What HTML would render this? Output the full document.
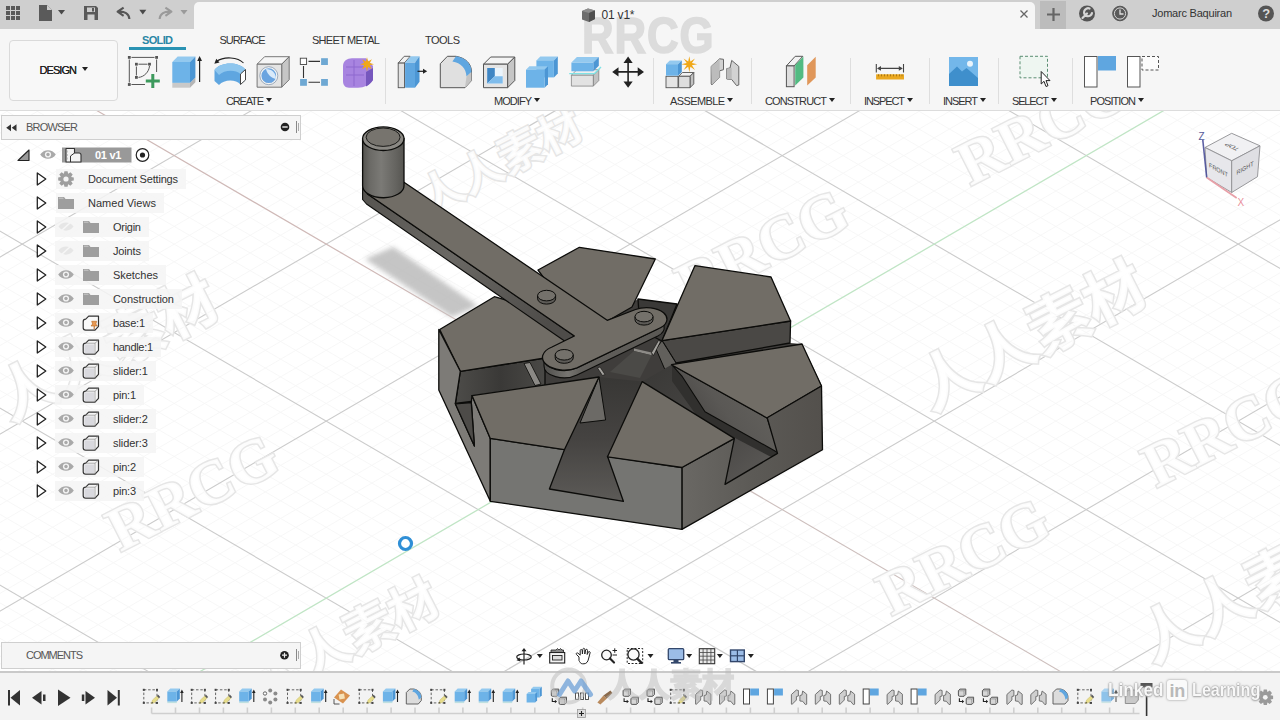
<!DOCTYPE html>
<html><head><meta charset="utf-8"><title>01 v1</title>
<style>
html,body{margin:0;padding:0;background:#fff;}
#root{position:relative;width:1280px;height:720px;overflow:hidden;background:#fff;font-family:"Liberation Sans","Noto Sans CJK SC",sans-serif;font-size:11px;color:#333;}
.abs{position:absolute;}
#topbar{position:absolute;left:0;top:0;width:1280px;height:29px;background:#cfcfcf;}
#tab{position:absolute;left:194px;top:1.5px;width:841px;height:28px;background:#f6f6f6;border-radius:5px 5px 0 0;}
#toolbar{position:absolute;left:0;top:29px;width:1280px;height:81px;background:#f6f6f6;border-bottom:1px solid #dcdcdc;}
.lbl{position:absolute;white-space:nowrap;line-height:12px;}
.tri{display:inline-block;width:0;height:0;border-left:3px solid transparent;border-right:3px solid transparent;border-top:4px solid #222;vertical-align:middle;margin-left:3px;position:relative;top:-2px}
.sep{position:absolute;top:58px;width:1px;height:46px;background:#dedede;}
.wm{position:absolute;white-space:nowrap;font-weight:bold;transform-origin:50% 50%;pointer-events:none;}

</style></head>
<body>
<div id="root">
<svg id="grid" width="1280" height="720" viewBox="0 0 1280 720" style="position:absolute;left:0;top:0">
<g><line x1="-1178.6" y1="430.0" x2="645.4" y2="-632.0" stroke="#f6f6f6" stroke-width="0.9"/>
<line x1="-1178.6" y1="412.2" x2="645.4" y2="1474.2" stroke="#f6f6f6" stroke-width="0.9"/>
<line x1="-1163.4" y1="438.8" x2="660.6" y2="-623.2" stroke="#f6f6f6" stroke-width="0.9"/>
<line x1="-1163.4" y1="403.4" x2="660.6" y2="1465.4" stroke="#f6f6f6" stroke-width="0.9"/>
<line x1="-1148.2" y1="447.7" x2="675.8" y2="-614.3" stroke="#f6f6f6" stroke-width="0.9"/>
<line x1="-1148.2" y1="394.6" x2="675.8" y2="1456.5" stroke="#f6f6f6" stroke-width="0.9"/>
<line x1="-1133.0" y1="456.5" x2="691.0" y2="-605.5" stroke="#f6f6f6" stroke-width="0.9"/>
<line x1="-1133.0" y1="385.7" x2="691.0" y2="1447.7" stroke="#f6f6f6" stroke-width="0.9"/>
<line x1="-1117.8" y1="465.4" x2="706.2" y2="-596.6" stroke="#f6f6f6" stroke-width="0.9"/>
<line x1="-1117.8" y1="376.9" x2="706.2" y2="1438.8" stroke="#f6f6f6" stroke-width="0.9"/>
<line x1="-1102.6" y1="474.2" x2="721.4" y2="-587.8" stroke="#f6f6f6" stroke-width="0.9"/>
<line x1="-1102.6" y1="368.0" x2="721.4" y2="1430.0" stroke="#f6f6f6" stroke-width="0.9"/>
<line x1="-1087.4" y1="483.1" x2="736.6" y2="-579.0" stroke="#f6f6f6" stroke-width="0.9"/>
<line x1="-1087.4" y1="359.2" x2="736.6" y2="1421.2" stroke="#f6f6f6" stroke-width="0.9"/>
<line x1="-1072.2" y1="491.9" x2="751.8" y2="-570.1" stroke="#f6f6f6" stroke-width="0.9"/>
<line x1="-1072.2" y1="350.3" x2="751.8" y2="1412.3" stroke="#f6f6f6" stroke-width="0.9"/>
<line x1="-1057.0" y1="500.8" x2="767.0" y2="-561.2" stroke="#f6f6f6" stroke-width="0.9"/>
<line x1="-1057.0" y1="341.4" x2="767.0" y2="1403.5" stroke="#f6f6f6" stroke-width="0.9"/>
<line x1="-1026.6" y1="518.5" x2="797.4" y2="-543.5" stroke="#f6f6f6" stroke-width="0.9"/>
<line x1="-1026.6" y1="323.8" x2="797.4" y2="1385.8" stroke="#f6f6f6" stroke-width="0.9"/>
<line x1="-1011.4" y1="527.3" x2="812.6" y2="-534.7" stroke="#f6f6f6" stroke-width="0.9"/>
<line x1="-1011.4" y1="314.9" x2="812.6" y2="1376.9" stroke="#f6f6f6" stroke-width="0.9"/>
<line x1="-996.2" y1="536.2" x2="827.8" y2="-525.8" stroke="#f6f6f6" stroke-width="0.9"/>
<line x1="-996.2" y1="306.1" x2="827.8" y2="1368.0" stroke="#f6f6f6" stroke-width="0.9"/>
<line x1="-981.0" y1="545.0" x2="843.0" y2="-517.0" stroke="#f6f6f6" stroke-width="0.9"/>
<line x1="-981.0" y1="297.2" x2="843.0" y2="1359.2" stroke="#f6f6f6" stroke-width="0.9"/>
<line x1="-965.8" y1="553.9" x2="858.2" y2="-508.1" stroke="#f6f6f6" stroke-width="0.9"/>
<line x1="-965.8" y1="288.4" x2="858.2" y2="1350.3" stroke="#f6f6f6" stroke-width="0.9"/>
<line x1="-950.6" y1="562.7" x2="873.4" y2="-499.3" stroke="#f6f6f6" stroke-width="0.9"/>
<line x1="-950.6" y1="279.5" x2="873.4" y2="1341.5" stroke="#f6f6f6" stroke-width="0.9"/>
<line x1="-935.4" y1="571.5" x2="888.6" y2="-490.4" stroke="#f6f6f6" stroke-width="0.9"/>
<line x1="-935.4" y1="270.7" x2="888.6" y2="1332.7" stroke="#f6f6f6" stroke-width="0.9"/>
<line x1="-920.2" y1="580.4" x2="903.8" y2="-481.6" stroke="#f6f6f6" stroke-width="0.9"/>
<line x1="-920.2" y1="261.8" x2="903.8" y2="1323.8" stroke="#f6f6f6" stroke-width="0.9"/>
<line x1="-905.0" y1="589.2" x2="919.0" y2="-472.7" stroke="#f6f6f6" stroke-width="0.9"/>
<line x1="-905.0" y1="252.9" x2="919.0" y2="1315.0" stroke="#f6f6f6" stroke-width="0.9"/>
<line x1="-874.6" y1="607.0" x2="949.4" y2="-455.0" stroke="#f6f6f6" stroke-width="0.9"/>
<line x1="-874.6" y1="235.2" x2="949.4" y2="1297.2" stroke="#f6f6f6" stroke-width="0.9"/>
<line x1="-859.4" y1="615.8" x2="964.6" y2="-446.2" stroke="#f6f6f6" stroke-width="0.9"/>
<line x1="-859.4" y1="226.4" x2="964.6" y2="1288.4" stroke="#f6f6f6" stroke-width="0.9"/>
<line x1="-844.2" y1="624.7" x2="979.8" y2="-437.3" stroke="#f6f6f6" stroke-width="0.9"/>
<line x1="-844.2" y1="217.6" x2="979.8" y2="1279.5" stroke="#f6f6f6" stroke-width="0.9"/>
<line x1="-829.0" y1="633.5" x2="995.0" y2="-428.5" stroke="#f6f6f6" stroke-width="0.9"/>
<line x1="-829.0" y1="208.7" x2="995.0" y2="1270.7" stroke="#f6f6f6" stroke-width="0.9"/>
<line x1="-813.8" y1="642.4" x2="1010.2" y2="-419.6" stroke="#f6f6f6" stroke-width="0.9"/>
<line x1="-813.8" y1="199.9" x2="1010.2" y2="1261.8" stroke="#f6f6f6" stroke-width="0.9"/>
<line x1="-798.6" y1="651.2" x2="1025.4" y2="-410.8" stroke="#f6f6f6" stroke-width="0.9"/>
<line x1="-798.6" y1="191.0" x2="1025.4" y2="1253.0" stroke="#f6f6f6" stroke-width="0.9"/>
<line x1="-783.4" y1="660.0" x2="1040.6" y2="-401.9" stroke="#f6f6f6" stroke-width="0.9"/>
<line x1="-783.4" y1="182.2" x2="1040.6" y2="1244.2" stroke="#f6f6f6" stroke-width="0.9"/>
<line x1="-768.2" y1="668.9" x2="1055.8" y2="-393.1" stroke="#f6f6f6" stroke-width="0.9"/>
<line x1="-768.2" y1="173.3" x2="1055.8" y2="1235.3" stroke="#f6f6f6" stroke-width="0.9"/>
<line x1="-753.0" y1="677.8" x2="1071.0" y2="-384.2" stroke="#f6f6f6" stroke-width="0.9"/>
<line x1="-753.0" y1="164.5" x2="1071.0" y2="1226.5" stroke="#f6f6f6" stroke-width="0.9"/>
<line x1="-722.6" y1="695.5" x2="1101.4" y2="-366.5" stroke="#f6f6f6" stroke-width="0.9"/>
<line x1="-722.6" y1="146.8" x2="1101.4" y2="1208.8" stroke="#f6f6f6" stroke-width="0.9"/>
<line x1="-707.4" y1="704.3" x2="1116.6" y2="-357.7" stroke="#f6f6f6" stroke-width="0.9"/>
<line x1="-707.4" y1="137.9" x2="1116.6" y2="1199.9" stroke="#f6f6f6" stroke-width="0.9"/>
<line x1="-692.2" y1="713.1" x2="1131.8" y2="-348.9" stroke="#f6f6f6" stroke-width="0.9"/>
<line x1="-692.2" y1="129.1" x2="1131.8" y2="1191.0" stroke="#f6f6f6" stroke-width="0.9"/>
<line x1="-677.0" y1="722.0" x2="1147.0" y2="-340.0" stroke="#f6f6f6" stroke-width="0.9"/>
<line x1="-677.0" y1="120.2" x2="1147.0" y2="1182.2" stroke="#f6f6f6" stroke-width="0.9"/>
<line x1="-661.8" y1="730.9" x2="1162.2" y2="-331.1" stroke="#f6f6f6" stroke-width="0.9"/>
<line x1="-661.8" y1="111.4" x2="1162.2" y2="1173.3" stroke="#f6f6f6" stroke-width="0.9"/>
<line x1="-646.6" y1="739.7" x2="1177.4" y2="-322.3" stroke="#f6f6f6" stroke-width="0.9"/>
<line x1="-646.6" y1="102.5" x2="1177.4" y2="1164.5" stroke="#f6f6f6" stroke-width="0.9"/>
<line x1="-631.4" y1="748.6" x2="1192.6" y2="-313.4" stroke="#f6f6f6" stroke-width="0.9"/>
<line x1="-631.4" y1="93.7" x2="1192.6" y2="1155.7" stroke="#f6f6f6" stroke-width="0.9"/>
<line x1="-616.2" y1="757.4" x2="1207.8" y2="-304.6" stroke="#f6f6f6" stroke-width="0.9"/>
<line x1="-616.2" y1="84.8" x2="1207.8" y2="1146.8" stroke="#f6f6f6" stroke-width="0.9"/>
<line x1="-601.0" y1="766.2" x2="1223.0" y2="-295.8" stroke="#f6f6f6" stroke-width="0.9"/>
<line x1="-601.0" y1="76.0" x2="1223.0" y2="1138.0" stroke="#f6f6f6" stroke-width="0.9"/>
<line x1="-570.6" y1="784.0" x2="1253.4" y2="-278.0" stroke="#f6f6f6" stroke-width="0.9"/>
<line x1="-570.6" y1="58.3" x2="1253.4" y2="1120.2" stroke="#f6f6f6" stroke-width="0.9"/>
<line x1="-555.4" y1="792.8" x2="1268.6" y2="-269.2" stroke="#f6f6f6" stroke-width="0.9"/>
<line x1="-555.4" y1="49.4" x2="1268.6" y2="1111.4" stroke="#f6f6f6" stroke-width="0.9"/>
<line x1="-540.2" y1="801.7" x2="1283.8" y2="-260.3" stroke="#f6f6f6" stroke-width="0.9"/>
<line x1="-540.2" y1="40.6" x2="1283.8" y2="1102.5" stroke="#f6f6f6" stroke-width="0.9"/>
<line x1="-525.0" y1="810.5" x2="1299.0" y2="-251.5" stroke="#f6f6f6" stroke-width="0.9"/>
<line x1="-525.0" y1="31.7" x2="1299.0" y2="1093.7" stroke="#f6f6f6" stroke-width="0.9"/>
<line x1="-509.8" y1="819.4" x2="1314.2" y2="-242.6" stroke="#f6f6f6" stroke-width="0.9"/>
<line x1="-509.8" y1="22.9" x2="1314.2" y2="1084.8" stroke="#f6f6f6" stroke-width="0.9"/>
<line x1="-494.6" y1="828.2" x2="1329.4" y2="-233.8" stroke="#f6f6f6" stroke-width="0.9"/>
<line x1="-494.6" y1="14.0" x2="1329.4" y2="1076.0" stroke="#f6f6f6" stroke-width="0.9"/>
<line x1="-479.4" y1="837.0" x2="1344.6" y2="-224.9" stroke="#f6f6f6" stroke-width="0.9"/>
<line x1="-479.4" y1="5.2" x2="1344.6" y2="1067.2" stroke="#f6f6f6" stroke-width="0.9"/>
<line x1="-464.2" y1="845.9" x2="1359.8" y2="-216.1" stroke="#f6f6f6" stroke-width="0.9"/>
<line x1="-464.2" y1="-3.7" x2="1359.8" y2="1058.3" stroke="#f6f6f6" stroke-width="0.9"/>
<line x1="-449.0" y1="854.8" x2="1375.0" y2="-207.2" stroke="#f6f6f6" stroke-width="0.9"/>
<line x1="-449.0" y1="-12.5" x2="1375.0" y2="1049.5" stroke="#f6f6f6" stroke-width="0.9"/>
<line x1="-418.6" y1="872.5" x2="1405.4" y2="-189.5" stroke="#f6f6f6" stroke-width="0.9"/>
<line x1="-418.6" y1="-30.2" x2="1405.4" y2="1031.8" stroke="#f6f6f6" stroke-width="0.9"/>
<line x1="-403.4" y1="881.3" x2="1420.6" y2="-180.7" stroke="#f6f6f6" stroke-width="0.9"/>
<line x1="-403.4" y1="-39.1" x2="1420.6" y2="1022.9" stroke="#f6f6f6" stroke-width="0.9"/>
<line x1="-388.2" y1="890.2" x2="1435.8" y2="-171.8" stroke="#f6f6f6" stroke-width="0.9"/>
<line x1="-388.2" y1="-47.9" x2="1435.8" y2="1014.1" stroke="#f6f6f6" stroke-width="0.9"/>
<line x1="-373.0" y1="899.0" x2="1451.0" y2="-163.0" stroke="#f6f6f6" stroke-width="0.9"/>
<line x1="-373.0" y1="-56.8" x2="1451.0" y2="1005.2" stroke="#f6f6f6" stroke-width="0.9"/>
<line x1="-357.8" y1="907.9" x2="1466.2" y2="-154.1" stroke="#f6f6f6" stroke-width="0.9"/>
<line x1="-357.8" y1="-65.6" x2="1466.2" y2="996.4" stroke="#f6f6f6" stroke-width="0.9"/>
<line x1="-342.6" y1="916.7" x2="1481.4" y2="-145.3" stroke="#f6f6f6" stroke-width="0.9"/>
<line x1="-342.6" y1="-74.5" x2="1481.4" y2="987.5" stroke="#f6f6f6" stroke-width="0.9"/>
<line x1="-327.4" y1="925.5" x2="1496.6" y2="-136.4" stroke="#f6f6f6" stroke-width="0.9"/>
<line x1="-327.4" y1="-83.3" x2="1496.6" y2="978.6" stroke="#f6f6f6" stroke-width="0.9"/>
<line x1="-312.2" y1="934.4" x2="1511.8" y2="-127.6" stroke="#f6f6f6" stroke-width="0.9"/>
<line x1="-312.2" y1="-92.2" x2="1511.8" y2="969.8" stroke="#f6f6f6" stroke-width="0.9"/>
<line x1="-297.0" y1="943.2" x2="1527.0" y2="-118.8" stroke="#f6f6f6" stroke-width="0.9"/>
<line x1="-297.0" y1="-101.0" x2="1527.0" y2="961.0" stroke="#f6f6f6" stroke-width="0.9"/>
<line x1="-266.6" y1="961.0" x2="1557.4" y2="-101.0" stroke="#f6f6f6" stroke-width="0.9"/>
<line x1="-266.6" y1="-118.7" x2="1557.4" y2="943.2" stroke="#f6f6f6" stroke-width="0.9"/>
<line x1="-251.4" y1="969.8" x2="1572.6" y2="-92.2" stroke="#f6f6f6" stroke-width="0.9"/>
<line x1="-251.4" y1="-127.6" x2="1572.6" y2="934.4" stroke="#f6f6f6" stroke-width="0.9"/>
<line x1="-236.2" y1="978.7" x2="1587.8" y2="-83.3" stroke="#f6f6f6" stroke-width="0.9"/>
<line x1="-236.2" y1="-136.4" x2="1587.8" y2="925.6" stroke="#f6f6f6" stroke-width="0.9"/>
<line x1="-221.0" y1="987.5" x2="1603.0" y2="-74.5" stroke="#f6f6f6" stroke-width="0.9"/>
<line x1="-221.0" y1="-145.3" x2="1603.0" y2="916.7" stroke="#f6f6f6" stroke-width="0.9"/>
<line x1="-205.8" y1="996.4" x2="1618.2" y2="-65.6" stroke="#f6f6f6" stroke-width="0.9"/>
<line x1="-205.8" y1="-154.1" x2="1618.2" y2="907.9" stroke="#f6f6f6" stroke-width="0.9"/>
<line x1="-190.6" y1="1005.2" x2="1633.4" y2="-56.8" stroke="#f6f6f6" stroke-width="0.9"/>
<line x1="-190.6" y1="-163.0" x2="1633.4" y2="899.0" stroke="#f6f6f6" stroke-width="0.9"/>
<line x1="-175.4" y1="1014.0" x2="1648.6" y2="-47.9" stroke="#f6f6f6" stroke-width="0.9"/>
<line x1="-175.4" y1="-171.8" x2="1648.6" y2="890.1" stroke="#f6f6f6" stroke-width="0.9"/>
<line x1="-160.2" y1="1022.9" x2="1663.8" y2="-39.1" stroke="#f6f6f6" stroke-width="0.9"/>
<line x1="-160.2" y1="-180.7" x2="1663.8" y2="881.3" stroke="#f6f6f6" stroke-width="0.9"/>
<line x1="-145.0" y1="1031.8" x2="1679.0" y2="-30.2" stroke="#f6f6f6" stroke-width="0.9"/>
<line x1="-145.0" y1="-189.5" x2="1679.0" y2="872.5" stroke="#f6f6f6" stroke-width="0.9"/>
<line x1="-114.6" y1="1049.5" x2="1709.4" y2="-12.5" stroke="#f6f6f6" stroke-width="0.9"/>
<line x1="-114.6" y1="-207.2" x2="1709.4" y2="854.8" stroke="#f6f6f6" stroke-width="0.9"/>
<line x1="-99.4" y1="1058.3" x2="1724.6" y2="-3.7" stroke="#f6f6f6" stroke-width="0.9"/>
<line x1="-99.4" y1="-216.1" x2="1724.6" y2="845.9" stroke="#f6f6f6" stroke-width="0.9"/>
<line x1="-84.2" y1="1067.2" x2="1739.8" y2="5.1" stroke="#f6f6f6" stroke-width="0.9"/>
<line x1="-84.2" y1="-224.9" x2="1739.8" y2="837.1" stroke="#f6f6f6" stroke-width="0.9"/>
<line x1="-69.0" y1="1076.0" x2="1755.0" y2="14.0" stroke="#f6f6f6" stroke-width="0.9"/>
<line x1="-69.0" y1="-233.8" x2="1755.0" y2="828.2" stroke="#f6f6f6" stroke-width="0.9"/>
<line x1="-53.8" y1="1084.8" x2="1770.2" y2="22.9" stroke="#f6f6f6" stroke-width="0.9"/>
<line x1="-53.8" y1="-242.6" x2="1770.2" y2="819.4" stroke="#f6f6f6" stroke-width="0.9"/>
<line x1="-38.6" y1="1093.7" x2="1785.4" y2="31.7" stroke="#f6f6f6" stroke-width="0.9"/>
<line x1="-38.6" y1="-251.5" x2="1785.4" y2="810.5" stroke="#f6f6f6" stroke-width="0.9"/>
<line x1="-23.4" y1="1102.5" x2="1800.6" y2="40.5" stroke="#f6f6f6" stroke-width="0.9"/>
<line x1="-23.4" y1="-260.3" x2="1800.6" y2="801.7" stroke="#f6f6f6" stroke-width="0.9"/>
<line x1="-8.2" y1="1111.4" x2="1815.8" y2="49.4" stroke="#f6f6f6" stroke-width="0.9"/>
<line x1="-8.2" y1="-269.2" x2="1815.8" y2="792.8" stroke="#f6f6f6" stroke-width="0.9"/>
<line x1="7.0" y1="1120.2" x2="1831.0" y2="58.2" stroke="#f6f6f6" stroke-width="0.9"/>
<line x1="7.0" y1="-278.0" x2="1831.0" y2="784.0" stroke="#f6f6f6" stroke-width="0.9"/>
<line x1="37.4" y1="1138.0" x2="1861.4" y2="76.0" stroke="#f6f6f6" stroke-width="0.9"/>
<line x1="37.4" y1="-295.8" x2="1861.4" y2="766.2" stroke="#f6f6f6" stroke-width="0.9"/>
<line x1="52.6" y1="1146.8" x2="1876.6" y2="84.8" stroke="#f6f6f6" stroke-width="0.9"/>
<line x1="52.6" y1="-304.6" x2="1876.6" y2="757.4" stroke="#f6f6f6" stroke-width="0.9"/>
<line x1="67.8" y1="1155.7" x2="1891.8" y2="93.6" stroke="#f6f6f6" stroke-width="0.9"/>
<line x1="67.8" y1="-313.4" x2="1891.8" y2="748.6" stroke="#f6f6f6" stroke-width="0.9"/>
<line x1="83.0" y1="1164.5" x2="1907.0" y2="102.5" stroke="#f6f6f6" stroke-width="0.9"/>
<line x1="83.0" y1="-322.3" x2="1907.0" y2="739.7" stroke="#f6f6f6" stroke-width="0.9"/>
<line x1="98.2" y1="1173.3" x2="1922.2" y2="111.4" stroke="#f6f6f6" stroke-width="0.9"/>
<line x1="98.2" y1="-331.1" x2="1922.2" y2="730.9" stroke="#f6f6f6" stroke-width="0.9"/>
<line x1="113.4" y1="1182.2" x2="1937.4" y2="120.2" stroke="#f6f6f6" stroke-width="0.9"/>
<line x1="113.4" y1="-340.0" x2="1937.4" y2="722.0" stroke="#f6f6f6" stroke-width="0.9"/>
<line x1="128.6" y1="1191.1" x2="1952.6" y2="129.1" stroke="#f6f6f6" stroke-width="0.9"/>
<line x1="128.6" y1="-348.9" x2="1952.6" y2="713.1" stroke="#f6f6f6" stroke-width="0.9"/>
<line x1="143.8" y1="1199.9" x2="1967.8" y2="137.9" stroke="#f6f6f6" stroke-width="0.9"/>
<line x1="143.8" y1="-357.7" x2="1967.8" y2="704.3" stroke="#f6f6f6" stroke-width="0.9"/>
<line x1="159.0" y1="1208.8" x2="1983.0" y2="146.8" stroke="#f6f6f6" stroke-width="0.9"/>
<line x1="159.0" y1="-366.5" x2="1983.0" y2="695.5" stroke="#f6f6f6" stroke-width="0.9"/>
<line x1="189.4" y1="1226.5" x2="2013.4" y2="164.5" stroke="#f6f6f6" stroke-width="0.9"/>
<line x1="189.4" y1="-384.2" x2="2013.4" y2="677.8" stroke="#f6f6f6" stroke-width="0.9"/>
<line x1="204.6" y1="1235.3" x2="2028.6" y2="173.3" stroke="#f6f6f6" stroke-width="0.9"/>
<line x1="204.6" y1="-393.1" x2="2028.6" y2="668.9" stroke="#f6f6f6" stroke-width="0.9"/>
<line x1="219.8" y1="1244.2" x2="2043.8" y2="182.2" stroke="#f6f6f6" stroke-width="0.9"/>
<line x1="219.8" y1="-401.9" x2="2043.8" y2="660.0" stroke="#f6f6f6" stroke-width="0.9"/>
<line x1="235.0" y1="1253.0" x2="2059.0" y2="191.0" stroke="#f6f6f6" stroke-width="0.9"/>
<line x1="235.0" y1="-410.8" x2="2059.0" y2="651.2" stroke="#f6f6f6" stroke-width="0.9"/>
<line x1="250.2" y1="1261.8" x2="2074.2" y2="199.9" stroke="#f6f6f6" stroke-width="0.9"/>
<line x1="250.2" y1="-419.6" x2="2074.2" y2="642.4" stroke="#f6f6f6" stroke-width="0.9"/>
<line x1="265.4" y1="1270.7" x2="2089.4" y2="208.7" stroke="#f6f6f6" stroke-width="0.9"/>
<line x1="265.4" y1="-428.5" x2="2089.4" y2="633.5" stroke="#f6f6f6" stroke-width="0.9"/>
<line x1="280.6" y1="1279.5" x2="2104.6" y2="217.5" stroke="#f6f6f6" stroke-width="0.9"/>
<line x1="280.6" y1="-437.3" x2="2104.6" y2="624.7" stroke="#f6f6f6" stroke-width="0.9"/>
<line x1="295.8" y1="1288.4" x2="2119.8" y2="226.4" stroke="#f6f6f6" stroke-width="0.9"/>
<line x1="295.8" y1="-446.2" x2="2119.8" y2="615.8" stroke="#f6f6f6" stroke-width="0.9"/>
<line x1="311.0" y1="1297.2" x2="2135.0" y2="235.2" stroke="#f6f6f6" stroke-width="0.9"/>
<line x1="311.0" y1="-455.0" x2="2135.0" y2="607.0" stroke="#f6f6f6" stroke-width="0.9"/>
<line x1="341.4" y1="1315.0" x2="2165.4" y2="253.0" stroke="#f6f6f6" stroke-width="0.9"/>
<line x1="341.4" y1="-472.7" x2="2165.4" y2="589.2" stroke="#f6f6f6" stroke-width="0.9"/>
<line x1="356.6" y1="1323.8" x2="2180.6" y2="261.8" stroke="#f6f6f6" stroke-width="0.9"/>
<line x1="356.6" y1="-481.6" x2="2180.6" y2="580.4" stroke="#f6f6f6" stroke-width="0.9"/>
<line x1="371.8" y1="1332.7" x2="2195.8" y2="270.7" stroke="#f6f6f6" stroke-width="0.9"/>
<line x1="371.8" y1="-490.4" x2="2195.8" y2="571.5" stroke="#f6f6f6" stroke-width="0.9"/>
<line x1="387.0" y1="1341.5" x2="2211.0" y2="279.5" stroke="#f6f6f6" stroke-width="0.9"/>
<line x1="387.0" y1="-499.3" x2="2211.0" y2="562.7" stroke="#f6f6f6" stroke-width="0.9"/>
<line x1="402.2" y1="1350.3" x2="2226.2" y2="288.4" stroke="#f6f6f6" stroke-width="0.9"/>
<line x1="402.2" y1="-508.1" x2="2226.2" y2="553.9" stroke="#f6f6f6" stroke-width="0.9"/>
<line x1="417.4" y1="1359.2" x2="2241.4" y2="297.2" stroke="#f6f6f6" stroke-width="0.9"/>
<line x1="417.4" y1="-517.0" x2="2241.4" y2="545.0" stroke="#f6f6f6" stroke-width="0.9"/>
<line x1="432.6" y1="1368.0" x2="2256.6" y2="306.0" stroke="#f6f6f6" stroke-width="0.9"/>
<line x1="432.6" y1="-525.8" x2="2256.6" y2="536.2" stroke="#f6f6f6" stroke-width="0.9"/>
<line x1="447.8" y1="1376.9" x2="2271.8" y2="314.9" stroke="#f6f6f6" stroke-width="0.9"/>
<line x1="447.8" y1="-534.7" x2="2271.8" y2="527.3" stroke="#f6f6f6" stroke-width="0.9"/>
<line x1="463.0" y1="1385.8" x2="2287.0" y2="323.8" stroke="#f6f6f6" stroke-width="0.9"/>
<line x1="463.0" y1="-543.5" x2="2287.0" y2="518.5" stroke="#f6f6f6" stroke-width="0.9"/>
<line x1="493.4" y1="1403.5" x2="2317.4" y2="341.5" stroke="#f6f6f6" stroke-width="0.9"/>
<line x1="493.4" y1="-561.2" x2="2317.4" y2="500.8" stroke="#f6f6f6" stroke-width="0.9"/>
<line x1="508.6" y1="1412.3" x2="2332.6" y2="350.3" stroke="#f6f6f6" stroke-width="0.9"/>
<line x1="508.6" y1="-570.1" x2="2332.6" y2="491.9" stroke="#f6f6f6" stroke-width="0.9"/>
<line x1="523.8" y1="1421.2" x2="2347.8" y2="359.2" stroke="#f6f6f6" stroke-width="0.9"/>
<line x1="523.8" y1="-579.0" x2="2347.8" y2="483.1" stroke="#f6f6f6" stroke-width="0.9"/>
<line x1="539.0" y1="1430.0" x2="2363.0" y2="368.0" stroke="#f6f6f6" stroke-width="0.9"/>
<line x1="539.0" y1="-587.8" x2="2363.0" y2="474.2" stroke="#f6f6f6" stroke-width="0.9"/>
<line x1="554.2" y1="1438.8" x2="2378.2" y2="376.9" stroke="#f6f6f6" stroke-width="0.9"/>
<line x1="554.2" y1="-596.6" x2="2378.2" y2="465.4" stroke="#f6f6f6" stroke-width="0.9"/>
<line x1="569.4" y1="1447.7" x2="2393.4" y2="385.7" stroke="#f6f6f6" stroke-width="0.9"/>
<line x1="569.4" y1="-605.5" x2="2393.4" y2="456.5" stroke="#f6f6f6" stroke-width="0.9"/>
<line x1="584.6" y1="1456.5" x2="2408.6" y2="394.5" stroke="#f6f6f6" stroke-width="0.9"/>
<line x1="584.6" y1="-614.3" x2="2408.6" y2="447.7" stroke="#f6f6f6" stroke-width="0.9"/>
<line x1="599.8" y1="1465.4" x2="2423.8" y2="403.4" stroke="#f6f6f6" stroke-width="0.9"/>
<line x1="599.8" y1="-623.2" x2="2423.8" y2="438.8" stroke="#f6f6f6" stroke-width="0.9"/>
<line x1="615.0" y1="1474.2" x2="2439.0" y2="412.2" stroke="#f6f6f6" stroke-width="0.9"/>
<line x1="615.0" y1="-632.0" x2="2439.0" y2="430.0" stroke="#f6f6f6" stroke-width="0.9"/>
<line x1="-1193.8" y1="421.1" x2="630.2" y2="-640.9" stroke="#cbcbcb" stroke-width="1.1"/>
<line x1="-1193.8" y1="421.1" x2="630.2" y2="1483.1" stroke="#cbcbcb" stroke-width="1.1"/>
<line x1="-1041.8" y1="509.6" x2="782.2" y2="-552.4" stroke="#cbcbcb" stroke-width="1.1"/>
<line x1="-1041.8" y1="332.6" x2="782.2" y2="1394.6" stroke="#cbcbcb" stroke-width="1.1"/>
<line x1="-889.8" y1="598.1" x2="934.2" y2="-463.9" stroke="#cbcbcb" stroke-width="1.1"/>
<line x1="-889.8" y1="244.1" x2="934.2" y2="1306.1" stroke="#cbcbcb" stroke-width="1.1"/>
<line x1="-737.8" y1="686.6" x2="1086.2" y2="-375.4" stroke="#cbcbcb" stroke-width="1.1"/>
<line x1="-737.8" y1="155.6" x2="1086.2" y2="1217.6" stroke="#cbcbcb" stroke-width="1.1"/>
<line x1="-585.8" y1="775.1" x2="1238.2" y2="-286.9" stroke="#cbcbcb" stroke-width="1.1"/>
<line x1="-585.8" y1="67.1" x2="1238.2" y2="1129.1" stroke="#cbcbcb" stroke-width="1.1"/>
<line x1="-433.8" y1="863.6" x2="1390.2" y2="-198.4" stroke="#cbcbcb" stroke-width="1.1"/>
<line x1="-433.8" y1="-21.4" x2="1390.2" y2="1040.6" stroke="#cbcbcb" stroke-width="1.1"/>
<line x1="-129.8" y1="1040.6" x2="1694.2" y2="-21.4" stroke="#cbcbcb" stroke-width="1.1"/>
<line x1="-129.8" y1="-198.4" x2="1694.2" y2="863.6" stroke="#cbcbcb" stroke-width="1.1"/>
<line x1="22.2" y1="1129.1" x2="1846.2" y2="67.1" stroke="#cbcbcb" stroke-width="1.1"/>
<line x1="22.2" y1="-286.9" x2="1846.2" y2="775.1" stroke="#cbcbcb" stroke-width="1.1"/>
<line x1="174.2" y1="1217.6" x2="1998.2" y2="155.6" stroke="#cbcbcb" stroke-width="1.1"/>
<line x1="174.2" y1="-375.4" x2="1998.2" y2="686.6" stroke="#cbcbcb" stroke-width="1.1"/>
<line x1="326.2" y1="1306.1" x2="2150.2" y2="244.1" stroke="#cbcbcb" stroke-width="1.1"/>
<line x1="326.2" y1="-463.9" x2="2150.2" y2="598.1" stroke="#cbcbcb" stroke-width="1.1"/>
<line x1="478.2" y1="1394.6" x2="2302.2" y2="332.6" stroke="#cbcbcb" stroke-width="1.1"/>
<line x1="478.2" y1="-552.4" x2="2302.2" y2="509.6" stroke="#cbcbcb" stroke-width="1.1"/>
<line x1="630.2" y1="1483.1" x2="2454.2" y2="421.1" stroke="#cbcbcb" stroke-width="1.1"/>
<line x1="630.2" y1="-640.9" x2="2454.2" y2="421.1" stroke="#cbcbcb" stroke-width="1.1"/>
<line x1="-281.8" y1="952.1" x2="1542.2" y2="-109.9" stroke="#c0e5c5" stroke-width="1.3"/>
<line x1="-281.8" y1="-109.9" x2="630.2" y2="421.1" stroke="#cfb9b7" stroke-width="1.2"/>
<line x1="630.2" y1="421.1" x2="1542.2" y2="952.1" stroke="#cdbfbd" stroke-width="1.1"/></g>
</svg>
<div class="wm" style="left:762px;top:247px;font-size:62px;line-height:62px;font-family:'Liberation Serif',serif;-webkit-text-stroke:3px #e6e6e6;paint-order:stroke fill;color:rgba(255,255,255,0.85);transform:translate(-50%,-50%) rotate(-27deg);">RRCG</div><div class="wm" style="left:1042px;top:126px;font-size:62px;line-height:62px;font-family:'Liberation Serif',serif;-webkit-text-stroke:3px #e6e6e6;paint-order:stroke fill;color:rgba(255,255,255,0.85);transform:translate(-50%,-50%) rotate(-27deg);">RRCG</div><div class="wm" style="left:1228px;top:428px;font-size:62px;line-height:62px;font-family:'Liberation Serif',serif;-webkit-text-stroke:3px #e6e6e6;paint-order:stroke fill;color:rgba(255,255,255,0.85);transform:translate(-50%,-50%) rotate(-27deg);">RRCG</div><div class="wm" style="left:963px;top:556px;font-size:62px;line-height:62px;font-family:'Liberation Serif',serif;-webkit-text-stroke:3px #e6e6e6;paint-order:stroke fill;color:rgba(255,255,255,0.85);transform:translate(-50%,-50%) rotate(-27deg);">RRCG</div><div class="wm" style="left:192px;top:492px;font-size:62px;line-height:62px;font-family:'Liberation Serif',serif;-webkit-text-stroke:3px #e6e6e6;paint-order:stroke fill;color:rgba(255,255,255,0.85);transform:translate(-50%,-50%) rotate(-27deg);">RRCG</div><div class="wm" style="left:501px;top:162px;font-size:44px;line-height:44px;font-family:'Liberation Sans','Noto Sans CJK SC',sans-serif;-webkit-text-stroke:3px #e6e6e6;paint-order:stroke fill;color:rgba(255,255,255,0.85);transform:translate(-50%,-50%) rotate(-27deg);">人人素材</div><div class="wm" style="left:1032px;top:337px;font-size:62px;line-height:62px;font-family:'Liberation Sans','Noto Sans CJK SC',sans-serif;-webkit-text-stroke:3px #e6e6e6;paint-order:stroke fill;color:rgba(255,255,255,0.85);transform:translate(-50%,-50%) rotate(-27deg);">人人素材</div><div class="wm" style="left:347px;top:640px;font-size:50px;line-height:50px;font-family:'Liberation Sans','Noto Sans CJK SC',sans-serif;-webkit-text-stroke:3px #e6e6e6;paint-order:stroke fill;color:rgba(255,255,255,0.85);transform:translate(-50%,-50%) rotate(-27deg);">人人素材</div><div class="wm" style="left:108px;top:350px;font-size:60px;line-height:60px;font-family:'Liberation Sans','Noto Sans CJK SC',sans-serif;-webkit-text-stroke:3px #e6e6e6;paint-order:stroke fill;color:rgba(255,255,255,0.85);transform:translate(-50%,-50%) rotate(-27deg);">人人素材</div><div class="wm" style="left:1250px;top:592px;font-size:60px;line-height:60px;font-family:'Liberation Sans','Noto Sans CJK SC',sans-serif;-webkit-text-stroke:3px #e6e6e6;paint-order:stroke fill;color:rgba(255,255,255,0.85);transform:translate(-50%,-50%) rotate(-27deg);">人人素材</div>
<svg id="cv" width="1280" height="720" viewBox="0 0 1280 720" style="position:absolute;left:0;top:0">
<defs>
<filter id="blur" x="-20%" y="-20%" width="140%" height="140%"><feGaussianBlur stdDeviation="2.6"/></filter>
<linearGradient id="gCyl" x1="0" y1="0" x2="1" y2="0"><stop offset="0" stop-color="#53524e"/><stop offset="0.18" stop-color="#6b6a66"/><stop offset="0.45" stop-color="#7b7a76"/><stop offset="0.8" stop-color="#656460"/><stop offset="1" stop-color="#565551"/></linearGradient>
<linearGradient id="gInnerL" x1="0" y1="0" x2="1" y2="0"><stop offset="0" stop-color="#4d4c49"/><stop offset="0.5" stop-color="#3a3937"/><stop offset="1" stop-color="#4a4946"/></linearGradient>
<linearGradient id="gNotch1" x1="0" y1="0" x2="0" y2="1"><stop offset="0" stop-color="#383735"/><stop offset="0.5" stop-color="#454341"/><stop offset="1" stop-color="#5c5a57"/></linearGradient>
<linearGradient id="gInnerR" x1="0" y1="0" x2="1" y2="1"><stop offset="0" stop-color="#393836"/><stop offset="0.6" stop-color="#4a4846"/><stop offset="1" stop-color="#5f5d5a"/></linearGradient>
<linearGradient id="gInnerR2" x1="1" y1="0" x2="0" y2="0.6"><stop offset="0" stop-color="#696762"/><stop offset="0.6" stop-color="#5a5855"/><stop offset="1" stop-color="#454341"/></linearGradient>
<linearGradient id="gRight" x1="0" y1="0" x2="1" y2="0"><stop offset="0" stop-color="#6a6864"/><stop offset="0.5" stop-color="#5c5a56"/><stop offset="1" stop-color="#53504c"/></linearGradient>
<linearGradient id="gLinkSide" x1="0" y1="0" x2="1" y2="0"><stop offset="0" stop-color="#4f4e4b"/><stop offset="0.2" stop-color="#777571"/><stop offset="0.3" stop-color="#62605c"/><stop offset="1" stop-color="#5a5854"/></linearGradient>
<linearGradient id="gArmSide" x1="0" y1="0" x2="1" y2="0.7"><stop offset="0" stop-color="#55534f"/><stop offset="0.5" stop-color="#6a6864"/><stop offset="1" stop-color="#4e4c49"/></linearGradient>
</defs>
<g><polygon points="365,259 393,247 478,306 452,317" fill="#c2c2c2" filter="url(#blur)" opacity="0.95"/>
<polygon points="457.0,372.0 545.0,352.0 607.0,321.0 638.0,299.0 678.0,304.0 700.0,330.0 790.0,322.0 790.0,343.0 802.0,344.0 822.0,386.0 822.0,450.0 682.0,529.0 490.0,501.0 455.0,403.0" fill="#3f3d3b" stroke="none" stroke-width="1.3" stroke-linejoin="round" />
<polygon points="638.0,299.0 677.0,304.0 662.0,341.0 640.0,330.0" fill="#3a3937" stroke="#0c0c0a" stroke-width="1.3" stroke-linejoin="round" />
<polygon points="538.0,270.0 579.4,247.3 655.3,259.0 632.0,307.0 607.5,321.0 560.0,300.0" fill="#716d66" stroke="#0c0c0a" stroke-width="1.3" stroke-linejoin="round" />
<polygon points="662.0,340.6 790.6,321.0 790.0,343.0 676.0,363.0" fill="#4a4845" stroke="#0c0c0a" stroke-width="1.3" stroke-linejoin="round" />
<polygon points="695.0,265.6 771.0,277.0 790.6,321.0 662.0,340.6" fill="#716d66" stroke="#0c0c0a" stroke-width="1.3" stroke-linejoin="round" />
<polygon points="656.0,349.0 662.0,340.6 676.0,363.0 672.0,386.0" fill="#62605c" stroke="#0c0c0a" stroke-width="1" stroke-linejoin="round" />
<polygon points="460.3,371.3 545.0,358.0 545.0,392.0 455.5,403.5" fill="url(#gInnerL)" stroke="#0c0c0a" stroke-width="1.3" stroke-linejoin="round" />
<polygon points="439.7,329.5 494.4,296.7 511.0,301.5 566.0,340.0 545.0,358.0 460.3,371.3" fill="#716d66" stroke="#0c0c0a" stroke-width="1.3" stroke-linejoin="round" />
<polygon points="438.8,329.5 460.3,371.3 455.3,403.5 474.4,446.0 471.3,402.5 472.0,395.6 490.3,438.4 490.3,501.3 438.8,390.0" fill="#7d7b77" stroke="#0c0c0a" stroke-width="1.3" stroke-linejoin="round" />
<polygon points="455.3,403.8 471.3,402.5 474.4,446.0" fill="#4d4b48" stroke="#0c0c0a" stroke-width="1.3" stroke-linejoin="round" />
<polygon points="599.0,377.0 642.2,381.6 607.5,457.5 623.4,501.3 549.4,489.0 564.4,449.7" fill="url(#gNotch1)" stroke="none" stroke-width="1.3" stroke-linejoin="round" />
<polygon points="599.0,377.0 605.6,420.0 580.0,423.0" fill="#6c6a66" stroke="#0c0c0a" stroke-width="1" stroke-linejoin="round" />
<polygon points="524.0,363.5 530.0,362.5 541.0,384.0 535.0,385.5" fill="#8b8985" stroke="#0c0c0a" stroke-width="0.8" stroke-linejoin="round" />
<polygon points="671.5,364.7 767.0,418.0 778.0,453.4 725.0,484.4 734.4,438.4 642.2,381.6" fill="url(#gInnerR)" stroke="none" stroke-width="1.3" stroke-linejoin="round" />
<polygon points="681.7,375.8 705.0,411.7 778.5,453.0 775.0,459.0 699.0,419.0 672.0,381.0 672.0,365.0" fill="#31302e" stroke="none" stroke-width="1.3" stroke-linejoin="round" />
<polygon points="672.0,365.0 767.2,418.0 778.5,453.0 705.0,411.7 681.7,375.8" fill="url(#gInnerR2)" stroke="#0c0c0a" stroke-width="1.1" stroke-linejoin="round" />
<polygon points="671.5,364.7 802.0,344.0 821.5,386.0 767.0,418.0" fill="#716d66" stroke="#0c0c0a" stroke-width="1.3" stroke-linejoin="round" />
<polygon points="681.9,467.5 734.4,438.4 725.0,484.4 777.5,453.4 767.2,417.8 821.5,386.0 822.5,449.7 681.9,529.4" fill="url(#gRight)" stroke="#0c0c0a" stroke-width="1.3" stroke-linejoin="round" />
<polygon points="490.3,438.4 564.4,449.7 549.4,489.0 623.4,501.3 607.5,456.3 681.9,467.5 681.9,529.4 490.3,501.3" fill="#757572" stroke="#0c0c0a" stroke-width="1.3" stroke-linejoin="round" />
<polygon points="642.2,381.6 734.4,438.4 681.9,467.5 607.5,456.8" fill="#716d66" stroke="#0c0c0a" stroke-width="1.3" stroke-linejoin="round" />
<polygon points="472.0,395.6 599.0,377.0 564.4,449.7 490.3,438.4" fill="#716d66" stroke="#0c0c0a" stroke-width="1.3" stroke-linejoin="round" />
<polygon points="634.0,348.5 651.5,352.6 651.5,355.2 634.0,351.0" fill="#8d8b87" stroke="none" stroke-width="1.3" stroke-linejoin="round" />
<polygon points="651.5,352.6 658.5,340.5 660.5,341.5 653.5,355.5" fill="#a3a19d" stroke="#0c0c0a" stroke-width="0.6" stroke-linejoin="round" />
<polygon points="597.5,368.0 600.0,367.0 605.0,374.5 602.5,375.5" fill="#a3a19d" stroke="#0c0c0a" stroke-width="0.6" stroke-linejoin="round" />
<polygon points="610.0,372.0 634.0,351.0 651.5,355.2 640.0,378.0" fill="#4b4a47" stroke="none" stroke-width="1.3" stroke-linejoin="round" />
<path d="M544,359.5 L544,366 A20,11.5 0 0 0 577,375 L657.8,336 A20,11.5 0 0 0 664,326 L664,319 L657.8,329 L577,367.8 A20,11.5 0 0 1 544,359.5 Z" fill="url(#gLinkSide)" stroke="#0c0c0a" stroke-width="1.1" stroke-linejoin="round"/>
<polygon points="362.6,186.0 362.6,199.5 366.5,204.0 566.0,342.0 574.4,336.0 367.5,194.0" fill="url(#gArmSide)" stroke="#0c0c0a" stroke-width="1.1" stroke-linejoin="round" />
<path d="M367.5,194 L404,182.3 L607.2,320.3 L635.5,309.5 A20,11.5 0 0 1 657.8,329 L577,367.8 A20,11.5 0 0 1 552,347 L574.4,336 Z" fill="#716d66" stroke="#0c0c0a" stroke-width="1.3" stroke-linejoin="round"/>
<path d="M537.6,295.6 L537.6,298.8 A9,5.3 0 0 0 555.6,298.8 L555.6,295.6 Z" fill="#5d5b57" stroke="#0c0c0a" stroke-width="1"/>
<ellipse cx="546.6" cy="295.6" rx="9" ry="5.3" fill="#74716b" stroke="#0c0c0a" stroke-width="1"/>
<path d="M635,316.6 L635,319.8 A9,5.3 0 0 0 653,319.8 L653,316.6 Z" fill="#5d5b57" stroke="#0c0c0a" stroke-width="1"/>
<ellipse cx="644" cy="316.6" rx="9" ry="5.3" fill="#74716b" stroke="#0c0c0a" stroke-width="1"/>
<path d="M555.2,354.8 L555.2,358.0 A9,5.3 0 0 0 573.2,358.0 L573.2,354.8 Z" fill="#5d5b57" stroke="#0c0c0a" stroke-width="1"/>
<ellipse cx="564.2" cy="354.8" rx="9" ry="5.3" fill="#74716b" stroke="#0c0c0a" stroke-width="1"/>
<path d="M362.6,138.5 L362.6,186 A20.7,12 0 0 0 404,185.5 L404,138.5 Z" fill="url(#gCyl)" stroke="#0c0c0a" stroke-width="1.3"/>
<ellipse cx="383.3" cy="138.7" rx="20.7" ry="11.8" fill="#8a8883" stroke="#0c0c0a" stroke-width="1.3"/>
<ellipse cx="383.1" cy="137.2" rx="17" ry="9.2" fill="#77746e" stroke="#1a1a18" stroke-width="1"/></g>
<polygon points="1205,147.5 1231.7,133.3 1260,145.8 1231.7,160.8" fill="#f1f1f3" stroke="#8e8e92" stroke-width="0.9" stroke-linejoin="round"/><polygon points="1205,147.5 1231.7,160.8 1231.7,192.5 1206.7,177.5" fill="#e7e7eb" stroke="#8e8e92" stroke-width="0.9" stroke-linejoin="round"/><polygon points="1231.7,160.8 1260,145.8 1257.5,176.7 1231.7,192.5" fill="#dfdfe3" stroke="#8e8e92" stroke-width="0.9" stroke-linejoin="round"/><path d="M1202.8,140 L1206.7,177.5" stroke="#4b4f9a" stroke-width="1.6" opacity="0.9"/><path d="M1206.7,177.5 L1236.7,198" stroke="#e8a0a8" stroke-width="1.8"/><text transform="matrix(0.86,0.43,-0.86,0.43,1232.5,146.5) rotate(180)" font-family="Liberation Sans, sans-serif" font-size="7" fill="#555" text-anchor="middle" dominant-baseline="middle">TOP</text><text transform="matrix(0.87,0.47,0,1,1218.5,170.5)" font-family="Liberation Sans, sans-serif" font-size="6.3" fill="#555" text-anchor="middle" dominant-baseline="middle">FRONT</text><text transform="matrix(0.87,-0.5,0,1,1245,168.5)" font-family="Liberation Sans, sans-serif" font-size="6.3" fill="#555" text-anchor="middle" dominant-baseline="middle">RIGHT</text><text x="1198.5" y="139.5" font-family="Liberation Sans, sans-serif" font-size="10" fill="#555a9a">Z</text><text x="1237.5" y="205.5" font-family="Liberation Sans, sans-serif" font-size="10" fill="#e8909a">X</text>
<!-- cursor ring -->
<circle cx="405.5" cy="543.5" r="6" fill="none" stroke="#2f8fd6" stroke-width="3.2"/>
</svg>
<!-- ======= TOP BAR ======= -->
<div id="topbar"></div>
<div id="tab"></div>
<div id="toolbar"></div>
<div class="lbl" style="left:581.5px;top:8.3px;font-size:50px;line-height:52px;color:#dcdcdc;font-weight:bold;line-height:56px;transform:scaleX(0.875);transform-origin:0 0;-webkit-text-stroke:1.6px #dcdcdc;letter-spacing:1px;">RRCG</div>
<svg class="abs" style="left:0;top:0" width="1280" height="30" viewBox="0 0 1280 30">
  <!-- apps grid -->
  <g fill="#5a5a5a">
    <rect x="6" y="6" width="4" height="4"/><rect x="11" y="6" width="4" height="4"/><rect x="16" y="6" width="4" height="4"/>
    <rect x="6" y="11" width="4" height="4"/><rect x="11" y="11" width="4" height="4"/><rect x="16" y="11" width="4" height="4"/>
    <rect x="6" y="16" width="4" height="4"/><rect x="11" y="16" width="4" height="4"/><rect x="16" y="16" width="4" height="4"/>
  </g>
  <!-- file -->
  <path d="M39,5 L47,5 L52,10 L52,21 L39,21 Z" fill="#5a5a5a"/><path d="M47,5 L47,10 L52,10 Z" fill="#cfcfcf"/>
  <path d="M58,10 L65,10 L61.5,14.5 Z" fill="#4a4a4a"/>
  <!-- save -->
  <path d="M84,6 L96,6 L98,8 L98,20 L84,20 Z" fill="#5a5a5a"/><rect x="87" y="7.5" width="8" height="4.5" fill="#cfcfcf"/><rect x="87.5" y="14.5" width="7" height="5.5" fill="#cfcfcf"/><rect x="92" y="8" width="2" height="3.5" fill="#5a5a5a"/>
  <!-- undo -->
  <path d="M123.6,7.6 L117.6,11.7 L123.6,15.8 M118.5,11.7 C124.5,11.2 129,13.5 129.4,19" fill="none" stroke="#555" stroke-width="2.1" stroke-linejoin="round"/>
  <path d="M139.3,9.8 L146.3,9.8 L142.8,14.6 Z" fill="#4a4a4a"/>
  <!-- redo (disabled) -->
  <path d="M165.4,7.6 L171.4,11.7 L165.4,15.8 M170.5,11.7 C164.5,11.2 160,13.5 159.6,19" fill="none" stroke="#9a9a9a" stroke-width="2.1" stroke-linejoin="round"/>
  <path d="M180.5,10 L187.5,10 L184,14.6 Z" fill="#9a9a9a"/>
  <!-- tab cube icon -->
  <g transform="translate(-1,1)"><path d="M583,10 L589,7.5 L596,9.5 L596,18 L590,21 L583,18.5 Z" fill="#6d6d6d"/><path d="M583,10 L590,12 L596,9.5 L589,7.5 Z" fill="#8e8e8e"/><path d="M590,12 L590,21 L596,18 L596,9.5 Z" fill="#505050"/></g>
  <!-- close x -->
  <path d="M1020.5,10.5 L1027.5,17.5 M1027.5,10.5 L1020.5,17.5" stroke="#666" stroke-width="1.3" fill="none"/>
  <!-- plus box -->
  <rect x="1040" y="1" width="26" height="28" fill="#bcbcbc"/>
  <path d="M1047,14.5 L1060,14.5 M1053.5,8 L1053.5,21" stroke="#666" stroke-width="2.2"/>
  <!-- wrench circle -->
  <circle cx="1087" cy="13.5" r="8" fill="#555"/>
  <path d="M1082.5,18 L1087,13.5 M1089.5,8.5 A4,4 0 1 0 1092,13" stroke="#d6d6d6" stroke-width="2.2" fill="none" stroke-linecap="round"/>
  <!-- clock -->
  <circle cx="1120" cy="13.5" r="7.3" fill="#5a5a5a" stroke="#555" stroke-width="1"/><circle cx="1120" cy="13.5" r="5.6" fill="none" stroke="#d6d6d6" stroke-width="1"/>
  <path d="M1120,9.5 L1120,14 L1123.5,14" stroke="#e0e0e0" stroke-width="1.3" fill="none"/>
  <!-- help -->
  <circle cx="1266" cy="13.5" r="8" fill="#555"/>
</svg>

<!-- ======= TOOLBAR ======= -->
<div class="abs" style="left:9px;top:39.5px;width:107px;height:59px;border:1px solid #dadada;border-radius:4px;background:#f8f8f8"></div>
<div class="abs" style="left:129px;top:47px;width:57px;height:3px;background:#2a93b3"></div>

<div class="sep" style="left:385px"></div>
<div class="sep" style="left:653px"></div>
<div class="sep" style="left:751px"></div>
<div class="sep" style="left:850px"></div>
<div class="sep" style="left:929px"></div>
<div class="sep" style="left:998px"></div>
<div class="sep" style="left:1072px"></div>
<div class="lbl" style="left:601.5px;top:8.3px;font-size:12px;line-height:14px;color:#333;letter-spacing:-0.20px;">01 v1*</div><div class="lbl" style="left:1152px;top:7px;font-size:11px;line-height:13px;color:#333;letter-spacing:-0.22px;">Jomarc Baquiran</div><div class="lbl" style="left:1262.3px;top:6px;font-size:13px;line-height:15px;color:#dcdcdc;font-weight:bold;">?</div><div class="lbl" style="left:39.5px;top:63.5px;font-size:11px;line-height:13px;color:#1e1e1e;letter-spacing:-0.93px;text-shadow:0 0 0.4px #333;">DESIGN<span class="tri" style="margin-left:6px;border-left-width:3.2px;border-right-width:3.2px"></span></div><div class="lbl" style="left:142px;top:34px;font-size:11px;line-height:13px;color:#2a86a5;font-weight:bold;letter-spacing:-0.65px;">SOLID</div><div class="lbl" style="left:219.5px;top:34px;font-size:11px;line-height:13px;color:#333;letter-spacing:-0.99px;">SURFACE</div><div class="lbl" style="left:312px;top:34px;font-size:11px;line-height:13px;color:#333;letter-spacing:-0.74px;">SHEET METAL</div><div class="lbl" style="left:425px;top:34px;font-size:11px;line-height:13px;color:#333;letter-spacing:-0.52px;">TOOLS</div><div class="lbl" style="left:226px;top:95px;font-size:11px;line-height:13px;color:#333;letter-spacing:-1.16px;">CREATE<span class="tri"></span></div><div class="lbl" style="left:494px;top:95px;font-size:11px;line-height:13px;color:#333;letter-spacing:-0.95px;">MODIFY<span class="tri"></span></div><div class="lbl" style="left:670px;top:95px;font-size:11px;line-height:13px;color:#333;letter-spacing:-0.61px;">ASSEMBLE<span class="tri"></span></div><div class="lbl" style="left:765px;top:95px;font-size:11px;line-height:13px;color:#333;letter-spacing:-0.88px;">CONSTRUCT<span class="tri"></span></div><div class="lbl" style="left:864px;top:95px;font-size:11px;line-height:13px;color:#333;letter-spacing:-1.11px;">INSPECT<span class="tri"></span></div><div class="lbl" style="left:943px;top:95px;font-size:11px;line-height:13px;color:#333;letter-spacing:-1.03px;">INSERT<span class="tri"></span></div><div class="lbl" style="left:1012px;top:95px;font-size:11px;line-height:13px;color:#333;letter-spacing:-1.16px;">SELECT<span class="tri"></span></div><div class="lbl" style="left:1090px;top:95px;font-size:11px;line-height:13px;color:#333;letter-spacing:-0.94px;">POSITION<span class="tri"></span></div>
<svg class="abs" style="left:0;top:50px" width="1280" height="45" viewBox="0 50 1280 45"><g stroke="#555" stroke-width="1" fill="none"><path d="M131.5,57.4 L154.5,57.4 M129.3,59.5 L129.3,82.5 M131.5,84.5 L145,84.5 M156.6,59.5 L156.6,72"/><path d="M138.5,64.2 L147.5,64.2 M136.4,66.5 L136.4,75.5"/><path d="M149.5,66 C149,72 144,77 138.5,77.4"/></g><rect x="127.9" y="56.0" width="2.8" height="2.8" fill="#555"/><rect x="155.2" y="56.0" width="2.8" height="2.8" fill="#555"/><rect x="127.9" y="83.1" width="2.8" height="2.8" fill="#555"/><rect x="135.0" y="62.800000000000004" width="2.8" height="2.8" fill="#555"/><rect x="148.1" y="62.800000000000004" width="2.8" height="2.8" fill="#555"/><rect x="135.0" y="76.0" width="2.8" height="2.8" fill="#555"/><path d="M151.3,74 L154.3,74 L154.3,79.4 L159.8,79.4 L159.8,82.4 L154.3,82.4 L154.3,88 L151.3,88 L151.3,82.4 L145.8,82.4 L145.8,79.4 L151.3,79.4 Z" fill="#3d9a5d"/><polygon points="172.3,82.8 177.70000000000002,77.39999999999999 195.4,77.39999999999999 190,82.8" fill="#d5d5d5"/><polygon points="190,82.8 195.4,77.39999999999999 195.4,82.3 190,87.7" fill="#b5b5b5"/><rect x="172.3" y="82.8" width="17.69999999999999" height="4.900000000000006" fill="#c9c9c9"/><polygon points="172.3,62 177.70000000000002,56.6 195.4,56.6 190,62" fill="#93c9ef"/><polygon points="190,62 195.4,56.6 195.4,77.39999999999999 190,82.8" fill="#4c96d4"/><rect x="172.3" y="62" width="17.69999999999999" height="20.799999999999997" fill="#6db3e8"/><path d="M199.6,82 L199.6,58" stroke="#222" stroke-width="1.2"/><path d="M197.2,61 L199.6,56 L202,61 Z" fill="#222"/><path d="M214.5,70 C220,62 238,61 245.5,69.5 L245.5,80 L240.5,84.5 C236,79 224,79 219,85 L214.5,81 Z" fill="#5fa6e0"/><path d="M214.5,70 C220,62 238,61 245.5,69.5 L240.5,74 C235,69 224,70 219,75 Z" fill="#8ec6ee"/><path d="M240.5,74 L245.5,69.5 L245.5,80 L240.5,84.5 Z" fill="#fff" stroke="#444" stroke-width="1"/><path d="M216.5,61.5 C224,56 238,57 243.5,63" stroke="#222" stroke-width="1.1" fill="none"/><path d="M214.3,63.8 L216.3,58.8 L219.5,62.5 Z" fill="#222"/><polygon points="257.1,64.2 264.6,56.7 289.2,56.7 281.7,64.2" fill="#f6f6f6" stroke="#6a6a6a" stroke-width="0.9" stroke-linejoin="round"/><polygon points="281.7,64.2 289.2,56.7 289.2,79.7 281.7,87.2" fill="#c6c6c6" stroke="#6a6a6a" stroke-width="0.9" stroke-linejoin="round"/><rect x="257.1" y="64.2" width="24.599999999999966" height="23.0" fill="#e4e4e4" stroke="#6a6a6a" stroke-width="0.9" stroke-linejoin="round"/><circle cx="268.8" cy="75.7" r="8.2" fill="#6aa4e0" stroke="#f4f4f4" stroke-width="1.6"/><circle cx="268.8" cy="75.7" r="9" fill="none" stroke="#7b8fa6" stroke-width="0.7"/><path d="M266,69 C272,69 276,73 276,79 C271,78 267,74 266,69 Z" fill="#d9eafa"/><path d="M308.5,61.4 L320,61.4 M303.5,66 L303.5,78 M308.5,82.3 L320,82.3" stroke="#333" stroke-width="1.1"/><rect x="300.3" y="58.2" width="6.3" height="6.3" fill="#fff" stroke="#444" stroke-width="0.9"/><rect x="321.1" y="58.2" width="6.8" height="6.8" fill="#6ea8d3"/><rect x="300.1" y="79" width="6.8" height="6.8" fill="#6ea8d3"/><rect x="321.1" y="79" width="6.8" height="6.8" fill="#6ea8d3"/><path d="M343,66 C343,61 347,58.2 352,58.2 L366,58.2 L373,66 L373,80 C370,85 364,87.7 358,87.7 L349,87.7 C345,87.7 343,85 343,81 Z" fill="#a884e0"/><path d="M366,72 L373,68 L373,80 C371,83 369,85 366,86.5 Z" fill="#7657bd"/><path d="M346,67 L364,67 M346,75 L364,75 M354,60 L354,86" stroke="#8e68cf" stroke-width="1"/><polygon points="367.0,57.2 368.1,61.4 371.9,59.3 369.8,63.1 374.0,64.2 369.8,65.3 371.9,69.1 368.1,67.0 367.0,71.2 365.9,67.0 362.1,69.1 364.2,65.3 360.0,64.2 364.2,63.1 362.1,59.3 365.9,61.4" fill="#f0a818"/><polygon points="398.2,63.1 404.2,56.3 410.2,56.3 404.2,63.1" fill="#f1f1f1" stroke="#555" stroke-width="0.9"/><rect x="398.2" y="63.1" width="6.3" height="24.6" fill="#e2e2e2" stroke="#555" stroke-width="0.9"/><polygon points="405.1,62.6 410.8,56.3 419.5,56.3 415,62.6" fill="#93c9ef"/><polygon points="415,62.6 419.5,56.3 419.5,81.7 415,87.7" fill="#4c96d4"/><rect x="405.1" y="62.6" width="9.9" height="25.1" fill="#5fa6e0"/><path d="M417.5,71.3 L424,71.3" stroke="#222" stroke-width="1.2"/><path d="M423,68.8 L427.2,71.3 L423,73.8 Z" fill="#222"/><path d="M440.3,63.7 L447.4,56.3 L456,56.3 C466,58 471.5,64 471.5,72 L471.5,80.6 L465,87.7 L440.3,87.7 Z" fill="#e0e0e0" stroke="#555" stroke-width="1" stroke-linejoin="round"/><path d="M452.4,61.5 L456,56.3 C466,58 471.5,64 471.5,72 L466.5,76.5 C466,68 461,63 452.4,61.5 Z" fill="#5fa6e0"/><path d="M465,87.7 L471.5,80.6 L471.5,72 L466.5,76.5 C466,80 465.5,84 465,87.7 Z" fill="#c4c4c4"/><polygon points="483.5,64.2 490.7,57.0 514.8000000000001,57.0 507.6,64.2" fill="#f4f4f4" stroke="#555" stroke-width="1" stroke-linejoin="round"/><polygon points="507.6,64.2 514.8000000000001,57.0 514.8000000000001,80.5 507.6,87.7" fill="#c6c6c6" stroke="#555" stroke-width="1" stroke-linejoin="round"/><rect x="483.5" y="64.2" width="24.100000000000023" height="23.5" fill="#e4e4e4" stroke="#555" stroke-width="1" stroke-linejoin="round"/><rect x="487.2" y="68" width="15.5" height="15.4" fill="#eaf4fc"/><polygon points="487.2,68 494.8,68 494.8,76.2 487.2,83.4" fill="#3f86c4"/><polygon points="487.2,83.4 494.8,76.2 502.7,76.2 502.7,83.4" fill="#7fbcec"/><polygon points="536.4,60.4 540.3,56.5 557.8,56.5 553.9,60.4" fill="#93c9ef"/><polygon points="553.9,60.4 557.8,56.5 557.8,73.5 553.9,77.4" fill="#4c96d4"/><rect x="536.4" y="60.4" width="17.5" height="17.000000000000007" fill="#6db3e8"/><polygon points="526,69.7 529.4,66.3 548.0,66.3 544.6,69.7" fill="#93c9ef"/><polygon points="544.6,69.7 548.0,66.3 548.0,84.3 544.6,87.7" fill="#4c96d4"/><rect x="526" y="69.7" width="18.600000000000023" height="18.0" fill="#6db3e8"/><polygon points="571.4,75.2 576.9,69.7 598.8,69.7 593.3,75.2" fill="#efefef" stroke="#777" stroke-width="0.7" stroke-linejoin="round"/><polygon points="593.3,75.2 598.8,69.7 598.8,80.6 593.3,86.1" fill="#c2c2c2" stroke="#777" stroke-width="0.7" stroke-linejoin="round"/><rect x="571.4" y="75.2" width="21.899999999999977" height="10.899999999999991" fill="#e2e2e2" stroke="#777" stroke-width="0.7" stroke-linejoin="round"/><polygon points="571.4,62.6 576.9,57.1 598.8,57.1 593.3,62.6" fill="#93c9ef"/><polygon points="593.3,62.6 598.8,57.1 598.8,65.8 593.3,71.3" fill="#4c96d4"/><rect x="571.4" y="62.6" width="21.899999999999977" height="8.699999999999996" fill="#6db3e8"/><path d="M569.2,73.6 L594.5,73.6 L601,67" stroke="#7fe3e6" stroke-width="1.4" fill="none"/><path d="M614.5,71.9 L642,71.9 M628.1,59 L628.1,85.5" stroke="#222" stroke-width="1.6"/><path d="M612.2,71.9 L618.5,67.2 L618.5,76.6 Z M644,71.9 L637.7,67.2 L637.7,76.6 Z M628.1,56.6 L623.5,63 L632.7,63 Z M628.1,87.8 L623.5,81.4 L632.7,81.4 Z" fill="#222"/><polygon points="678.6,76.3 682.4,72.5 693.8,72.5 690,76.3" fill="#f2f2f2" stroke="#555" stroke-width="0.9" stroke-linejoin="round"/><polygon points="690,76.3 693.8,72.5 693.8,83.9 690,87.7" fill="#c2c2c2" stroke="#555" stroke-width="0.9" stroke-linejoin="round"/><rect x="678.6" y="76.3" width="11.399999999999977" height="11.400000000000006" fill="#dedede" stroke="#555" stroke-width="0.9" stroke-linejoin="round"/><rect x="666" y="76.3" width="12" height="11.4" fill="#e4e4e4" stroke="#555" stroke-width="0.9"/><polygon points="666,64.2 669.8,60.400000000000006 681.8,60.400000000000006 678,64.2" fill="#93c9ef"/><polygon points="678,64.2 681.8,60.400000000000006 681.8,71.9 678,75.7" fill="#4c96d4"/><rect x="666" y="64.2" width="12" height="11.5" fill="#6db3e8"/><polygon points="689.3,56.2 690.4,61.6 695.0,58.5 691.9,63.1 697.3,64.2 691.9,65.3 695.0,69.9 690.4,66.8 689.3,72.2 688.2,66.8 683.6,69.9 686.7,65.3 681.3,64.2 686.7,63.1 683.6,58.5 688.2,61.6" fill="#f0a818"/><polygon points="711.2,66.4 719.6,58.8 723.5,59.3 723.5,69.7 719.6,70.8 719.6,77.4 712,85 711.2,83.9" fill="#d2d2d2" stroke="#666" stroke-width="1" stroke-linejoin="round"/><polygon points="711.2,66.4 719.6,58.8 719.6,77.4 712,85" fill="#bcbcbc"/><polygon points="726.7,68.6 730,68 731.7,60.4 738.8,66.4 738.8,85 736.6,85.6 731.7,79.5 726.7,79" fill="#d2d2d2" stroke="#666" stroke-width="1" stroke-linejoin="round"/><polygon points="726.7,68.6 731.7,68 731.7,79.5 726.7,79" fill="#bababa"/><polygon points="786.4,65.9 795.2,56.3 802.8,56.3 794.1,65.9" fill="#f2f2f2" stroke="#555" stroke-width="1"/><rect x="786.4" y="65.9" width="7.7" height="20.8" fill="#dedede" stroke="#555" stroke-width="1"/><polygon points="795.2,65.3 803.4,56.6 803.4,77.4 795.2,85.6" fill="#52bb82"/><polygon points="807.2,65.3 815.7,56.8 815.7,77.4 807.2,85.6" fill="#e0975a"/><path d="M876.3,64 L876.3,72.4 M903.5,64 L903.5,72.4 M878.5,68.4 L901.5,68.4" stroke="#444" stroke-width="1.1" fill="none"/><path d="M877,68.4 L881,66 L881,70.8 Z M902.8,68.4 L898.8,66 L898.8,70.8 Z" fill="#444"/><rect x="876.1" y="74.3" width="27.9" height="5.2" fill="#eaa820"/><path d="M878.5,74.3 v2 M881.5,74.3 v2 M884.5,74.3 v2 M887.5,74.3 v2 M890.5,74.3 v2 M893.5,74.3 v2 M896.5,74.3 v2 M899.5,74.3 v2 M902,74.3 v2" stroke="#9a6a10" stroke-width="0.8"/><rect x="949" y="57" width="29" height="29" fill="#73b7ea"/><path d="M949,74 L957,66.5 L962,71.5 L966.5,68 L978,78 L978,86 L949,86 Z" fill="#3f8fcc"/><circle cx="970" cy="63.8" r="3" fill="#e9f4fc"/><rect x="1020" y="56.3" width="27.5" height="21.5" fill="#eef6f1" stroke="#5a8f72" stroke-width="1" stroke-dasharray="3,2"/><path d="M1041.2,71.5 L1041.2,84 L1044,81.3 L1046,86.5 L1048,85.7 L1046,80.6 L1050,80.6 Z" fill="#fff" stroke="#222" stroke-width="1"/><rect x="1084.5" y="56.5" width="12.5" height="30.5" fill="#fff" stroke="#555" stroke-width="1"/><rect x="1098" y="56" width="18" height="14.5" fill="#5fa6e0"/><rect x="1127.5" y="56.5" width="12.5" height="30.5" fill="#fff" stroke="#555" stroke-width="1"/><rect x="1142" y="56.5" width="16.5" height="13.5" fill="#fcfcfc" stroke="#555" stroke-width="1" stroke-dasharray="3,2"/></svg>
<div class="abs" style="left:1px;top:115px;width:298px;height:23px;background:#f5f5f5;border:1px solid #cfcfcf;box-sizing:content-box"></div><div class="abs" style="left:56px;top:169px;width:130px;height:20px;background:rgba(244,244,244,0.85)"></div><div class="abs" style="left:56px;top:193px;width:108px;height:20px;background:rgba(244,244,244,0.85)"></div><div class="abs" style="left:55px;top:217px;width:94px;height:20px;background:rgba(244,244,244,0.85)"></div><div class="abs" style="left:55px;top:241px;width:94px;height:20px;background:rgba(244,244,244,0.85)"></div><div class="abs" style="left:55px;top:265px;width:111px;height:20px;background:rgba(244,244,244,0.85)"></div><div class="abs" style="left:55px;top:289px;width:127px;height:20px;background:rgba(244,244,244,0.85)"></div><div class="abs" style="left:55px;top:313px;width:98px;height:20px;background:rgba(244,244,244,0.85)"></div><div class="abs" style="left:55px;top:337px;width:106px;height:20px;background:rgba(244,244,244,0.85)"></div><div class="abs" style="left:55px;top:361px;width:101px;height:20px;background:rgba(244,244,244,0.85)"></div><div class="abs" style="left:55px;top:385px;width:89px;height:20px;background:rgba(244,244,244,0.85)"></div><div class="abs" style="left:55px;top:409px;width:101px;height:20px;background:rgba(244,244,244,0.85)"></div><div class="abs" style="left:55px;top:433px;width:101px;height:20px;background:rgba(244,244,244,0.85)"></div><div class="abs" style="left:55px;top:457px;width:89px;height:20px;background:rgba(244,244,244,0.85)"></div><div class="abs" style="left:55px;top:481px;width:89px;height:20px;background:rgba(244,244,244,0.85)"></div><svg class="abs" style="left:0;top:110px" width="320" height="400" viewBox="0 110 320 400"><path d="M11,124.3 L11,131.3 L6.2,127.8 Z M16.5,124.3 L16.5,131.3 L11.7,127.8 Z" fill="#333"/><circle cx="285" cy="127" r="4.3" fill="#222"/><rect x="282.3" y="126.3" width="5.4" height="1.4" fill="#eee"/><path d="M296.5,121 L296.5,133" stroke="#888" stroke-width="1"/><path d="M298.5,123 L298.5,131" stroke="#aaa" stroke-width="1"/><path d="M29,150 L29,160.5 L18,160.5 Z" fill="#999" stroke="#222" stroke-width="1.1" stroke-linejoin="round"/><path d="M40.2,154.5 C44,148.7 52,148.7 55.8,154.5 C52,160.3 44,160.3 40.2,154.5 Z" fill="#a9a9a9"/><circle cx="48" cy="154.5" r="3.1" fill="#f4f4f4"/><circle cx="48" cy="154.5" r="1.7" fill="#a9a9a9"/><rect x="62" y="147.5" width="69.5" height="15" fill="#999"/><path d="M66,162 L66,148.5 L74.5,148.5 L74.5,153 L79,153 Q81,153 81,155 L81,162 Z" fill="#f4f4f4" stroke="#333" stroke-width="1.1" stroke-linejoin="round"/><path d="M70.5,162 L70.5,156 L74.5,153" fill="none" stroke="#333" stroke-width="1"/><path d="M67.5,150.5 v10" stroke="#bbb" stroke-width="0.8" stroke-dasharray="2,1.5"/><circle cx="142.5" cy="155" r="6.3" fill="#fff" stroke="#222" stroke-width="1.2"/><circle cx="142.5" cy="155" r="2.6" fill="#222"/><path d="M37.3,173 L45.8,179 L37.3,185 Z" fill="#fff" stroke="#222" stroke-width="1.3" stroke-linejoin="round"/><polygon points="73.8,177.4 73.8,180.6 71.2,181.1 71.2,181.2 72.7,183.4 70.4,185.7 68.2,184.2 68.1,184.2 67.6,186.8 64.4,186.8 63.9,184.2 63.8,184.2 61.6,185.7 59.3,183.4 60.8,181.2 60.8,181.1 58.2,180.6 58.2,177.4 60.8,176.9 60.8,176.8 59.3,174.6 61.6,172.3 63.8,173.8 63.9,173.8 64.4,171.2 67.6,171.2 68.1,173.8 68.2,173.8 70.4,172.3 72.7,174.6 71.2,176.8 71.2,176.9" fill="#9e9e9e"/><circle cx="66" cy="179" r="2.6" fill="#f4f4f4"/><path d="M37.3,197 L45.8,203 L37.3,209 Z" fill="#fff" stroke="#222" stroke-width="1.3" stroke-linejoin="round"/><path d="M58,197 L64,197 L65.5,199 L74,199 L74,209 L58,209 Z" fill="#9e9e9e"/><path d="M58.8,198.2 L63.5,198.2" stroke="#d8d8d8" stroke-width="0.8"/><path d="M37.3,221 L45.8,227 L37.3,233 Z" fill="#fff" stroke="#222" stroke-width="1.3" stroke-linejoin="round"/><path d="M58.5,226.5 C62,221.0 70,221.0 73.5,226.5 C70,232.0 62,232.0 58.5,226.5 Z" fill="#e6e6e6"/><path d="M61,231.0 L71,222.0" stroke="#f6f6f6" stroke-width="1.6"/><path d="M83,221 L89,221 L90.5,223 L99,223 L99,233 L83,233 Z" fill="#9e9e9e"/><path d="M83.8,222.2 L88.5,222.2" stroke="#d8d8d8" stroke-width="0.8"/><path d="M37.3,245 L45.8,251 L37.3,257 Z" fill="#fff" stroke="#222" stroke-width="1.3" stroke-linejoin="round"/><path d="M58.5,250.5 C62,245.0 70,245.0 73.5,250.5 C70,256.0 62,256.0 58.5,250.5 Z" fill="#e6e6e6"/><path d="M61,255.0 L71,246.0" stroke="#f6f6f6" stroke-width="1.6"/><path d="M83,245 L89,245 L90.5,247 L99,247 L99,257 L83,257 Z" fill="#9e9e9e"/><path d="M83.8,246.2 L88.5,246.2" stroke="#d8d8d8" stroke-width="0.8"/><path d="M37.3,269 L45.8,275 L37.3,281 Z" fill="#fff" stroke="#222" stroke-width="1.3" stroke-linejoin="round"/><path d="M58.2,274.5 C62,268.7 70,268.7 73.8,274.5 C70,280.3 62,280.3 58.2,274.5 Z" fill="#a9a9a9"/><circle cx="66" cy="274.5" r="3.1" fill="#f4f4f4"/><circle cx="66" cy="274.5" r="1.7" fill="#a9a9a9"/><path d="M83,269 L89,269 L90.5,271 L99,271 L99,281 L83,281 Z" fill="#9e9e9e"/><path d="M83.8,270.2 L88.5,270.2" stroke="#d8d8d8" stroke-width="0.8"/><path d="M37.3,293 L45.8,299 L37.3,305 Z" fill="#fff" stroke="#222" stroke-width="1.3" stroke-linejoin="round"/><path d="M58.2,298.5 C62,292.7 70,292.7 73.8,298.5 C70,304.3 62,304.3 58.2,298.5 Z" fill="#a9a9a9"/><circle cx="66" cy="298.5" r="3.1" fill="#f4f4f4"/><circle cx="66" cy="298.5" r="1.7" fill="#a9a9a9"/><path d="M83,293 L89,293 L90.5,295 L99,295 L99,305 L83,305 Z" fill="#9e9e9e"/><path d="M83.8,294.2 L88.5,294.2" stroke="#d8d8d8" stroke-width="0.8"/><path d="M37.3,317 L45.8,323 L37.3,329 Z" fill="#fff" stroke="#222" stroke-width="1.3" stroke-linejoin="round"/><path d="M58.2,322.5 C62,316.7 70,316.7 73.8,322.5 C70,328.3 62,328.3 58.2,322.5 Z" fill="#a9a9a9"/><circle cx="66" cy="322.5" r="3.1" fill="#f4f4f4"/><circle cx="66" cy="322.5" r="1.7" fill="#a9a9a9"/><path d="M85.7,319.2 L88.7,316.2 L98.5,316.2 L98.5,326.3 L95.0,330.2 L85.7,330.2 Q83.2,330.2 83.2,327.8 L83.2,321.8 Q83.2,319.2 85.7,319.2 Z" fill="#f9f9f9" stroke="#333" stroke-width="1.2" stroke-linejoin="round"/><path d="M91.7,321.3 L96.7,321.3 L95.8,324.0 L97.4,326.0 L91.0,326.0 L92.60000000000001,324.0 Z" fill="#e89a55" stroke="#b5651d" stroke-width="0.6"/><path d="M94.2,326.0 L94.2,329.3" stroke="#b5651d" stroke-width="1"/><path d="M37.3,341 L45.8,347 L37.3,353 Z" fill="#fff" stroke="#222" stroke-width="1.3" stroke-linejoin="round"/><path d="M58.2,346.5 C62,340.7 70,340.7 73.8,346.5 C70,352.3 62,352.3 58.2,346.5 Z" fill="#a9a9a9"/><circle cx="66" cy="346.5" r="3.1" fill="#f4f4f4"/><circle cx="66" cy="346.5" r="1.7" fill="#a9a9a9"/><path d="M85.7,343.2 L88.7,340.2 L98.5,340.2 L98.5,350.3 L95.0,354.2 L85.7,354.2 Q83.2,354.2 83.2,351.8 L83.2,345.8 Q83.2,343.2 85.7,343.2 Z" fill="#f6f6f6" stroke="#333" stroke-width="1.2" stroke-linejoin="round"/><path d="M85.7,343.2 L95.0,343.2 L98.5,340.2 M95.0,343.2 L95.0,354.2" fill="none" stroke="#8a8a8a" stroke-width="0.7"/><rect x="84.4" y="344.40000000000003" width="9.6" height="8.8" fill="#d9d9de"/><path d="M37.3,365 L45.8,371 L37.3,377 Z" fill="#fff" stroke="#222" stroke-width="1.3" stroke-linejoin="round"/><path d="M58.2,370.5 C62,364.7 70,364.7 73.8,370.5 C70,376.3 62,376.3 58.2,370.5 Z" fill="#a9a9a9"/><circle cx="66" cy="370.5" r="3.1" fill="#f4f4f4"/><circle cx="66" cy="370.5" r="1.7" fill="#a9a9a9"/><path d="M85.7,367.2 L88.7,364.2 L98.5,364.2 L98.5,374.3 L95.0,378.2 L85.7,378.2 Q83.2,378.2 83.2,375.8 L83.2,369.8 Q83.2,367.2 85.7,367.2 Z" fill="#f6f6f6" stroke="#333" stroke-width="1.2" stroke-linejoin="round"/><path d="M85.7,367.2 L95.0,367.2 L98.5,364.2 M95.0,367.2 L95.0,378.2" fill="none" stroke="#8a8a8a" stroke-width="0.7"/><rect x="84.4" y="368.40000000000003" width="9.6" height="8.8" fill="#d9d9de"/><path d="M37.3,389 L45.8,395 L37.3,401 Z" fill="#fff" stroke="#222" stroke-width="1.3" stroke-linejoin="round"/><path d="M58.2,394.5 C62,388.7 70,388.7 73.8,394.5 C70,400.3 62,400.3 58.2,394.5 Z" fill="#a9a9a9"/><circle cx="66" cy="394.5" r="3.1" fill="#f4f4f4"/><circle cx="66" cy="394.5" r="1.7" fill="#a9a9a9"/><path d="M85.7,391.2 L88.7,388.2 L98.5,388.2 L98.5,398.3 L95.0,402.2 L85.7,402.2 Q83.2,402.2 83.2,399.8 L83.2,393.8 Q83.2,391.2 85.7,391.2 Z" fill="#f6f6f6" stroke="#333" stroke-width="1.2" stroke-linejoin="round"/><path d="M85.7,391.2 L95.0,391.2 L98.5,388.2 M95.0,391.2 L95.0,402.2" fill="none" stroke="#8a8a8a" stroke-width="0.7"/><rect x="84.4" y="392.40000000000003" width="9.6" height="8.8" fill="#d9d9de"/><path d="M37.3,413 L45.8,419 L37.3,425 Z" fill="#fff" stroke="#222" stroke-width="1.3" stroke-linejoin="round"/><path d="M58.2,418.5 C62,412.7 70,412.7 73.8,418.5 C70,424.3 62,424.3 58.2,418.5 Z" fill="#a9a9a9"/><circle cx="66" cy="418.5" r="3.1" fill="#f4f4f4"/><circle cx="66" cy="418.5" r="1.7" fill="#a9a9a9"/><path d="M85.7,415.2 L88.7,412.2 L98.5,412.2 L98.5,422.3 L95.0,426.2 L85.7,426.2 Q83.2,426.2 83.2,423.8 L83.2,417.8 Q83.2,415.2 85.7,415.2 Z" fill="#f6f6f6" stroke="#333" stroke-width="1.2" stroke-linejoin="round"/><path d="M85.7,415.2 L95.0,415.2 L98.5,412.2 M95.0,415.2 L95.0,426.2" fill="none" stroke="#8a8a8a" stroke-width="0.7"/><rect x="84.4" y="416.40000000000003" width="9.6" height="8.8" fill="#d9d9de"/><path d="M37.3,437 L45.8,443 L37.3,449 Z" fill="#fff" stroke="#222" stroke-width="1.3" stroke-linejoin="round"/><path d="M58.2,442.5 C62,436.7 70,436.7 73.8,442.5 C70,448.3 62,448.3 58.2,442.5 Z" fill="#a9a9a9"/><circle cx="66" cy="442.5" r="3.1" fill="#f4f4f4"/><circle cx="66" cy="442.5" r="1.7" fill="#a9a9a9"/><path d="M85.7,439.2 L88.7,436.2 L98.5,436.2 L98.5,446.3 L95.0,450.2 L85.7,450.2 Q83.2,450.2 83.2,447.8 L83.2,441.8 Q83.2,439.2 85.7,439.2 Z" fill="#f6f6f6" stroke="#333" stroke-width="1.2" stroke-linejoin="round"/><path d="M85.7,439.2 L95.0,439.2 L98.5,436.2 M95.0,439.2 L95.0,450.2" fill="none" stroke="#8a8a8a" stroke-width="0.7"/><rect x="84.4" y="440.40000000000003" width="9.6" height="8.8" fill="#d9d9de"/><path d="M37.3,461 L45.8,467 L37.3,473 Z" fill="#fff" stroke="#222" stroke-width="1.3" stroke-linejoin="round"/><path d="M58.2,466.5 C62,460.7 70,460.7 73.8,466.5 C70,472.3 62,472.3 58.2,466.5 Z" fill="#a9a9a9"/><circle cx="66" cy="466.5" r="3.1" fill="#f4f4f4"/><circle cx="66" cy="466.5" r="1.7" fill="#a9a9a9"/><path d="M85.7,463.2 L88.7,460.2 L98.5,460.2 L98.5,470.3 L95.0,474.2 L85.7,474.2 Q83.2,474.2 83.2,471.8 L83.2,465.8 Q83.2,463.2 85.7,463.2 Z" fill="#f6f6f6" stroke="#333" stroke-width="1.2" stroke-linejoin="round"/><path d="M85.7,463.2 L95.0,463.2 L98.5,460.2 M95.0,463.2 L95.0,474.2" fill="none" stroke="#8a8a8a" stroke-width="0.7"/><rect x="84.4" y="464.40000000000003" width="9.6" height="8.8" fill="#d9d9de"/><path d="M37.3,485 L45.8,491 L37.3,497 Z" fill="#fff" stroke="#222" stroke-width="1.3" stroke-linejoin="round"/><path d="M58.2,490.5 C62,484.7 70,484.7 73.8,490.5 C70,496.3 62,496.3 58.2,490.5 Z" fill="#a9a9a9"/><circle cx="66" cy="490.5" r="3.1" fill="#f4f4f4"/><circle cx="66" cy="490.5" r="1.7" fill="#a9a9a9"/><path d="M85.7,487.2 L88.7,484.2 L98.5,484.2 L98.5,494.3 L95.0,498.2 L85.7,498.2 Q83.2,498.2 83.2,495.8 L83.2,489.8 Q83.2,487.2 85.7,487.2 Z" fill="#f6f6f6" stroke="#333" stroke-width="1.2" stroke-linejoin="round"/><path d="M85.7,487.2 L95.0,487.2 L98.5,484.2 M95.0,487.2 L95.0,498.2" fill="none" stroke="#8a8a8a" stroke-width="0.7"/><rect x="84.4" y="488.40000000000003" width="9.6" height="8.8" fill="#d9d9de"/></svg><div class="lbl" style="left:26px;top:121px;font-size:11px;line-height:13px;color:#555;letter-spacing:-0.81px;">BROWSER</div><div class="lbl" style="left:95px;top:148.5px;font-size:11px;line-height:13px;color:#fff;font-weight:bold;letter-spacing:-0.26px;">01 v1</div><div class="lbl" style="left:88px;top:172.7px;font-size:11px;line-height:13px;color:#333;letter-spacing:-0.18px;">Document Settings</div><div class="lbl" style="left:88px;top:196.7px;font-size:11px;line-height:13px;color:#333;letter-spacing:0.03px;">Named Views</div><div class="lbl" style="left:113px;top:220.7px;font-size:11px;line-height:13px;color:#333;letter-spacing:-0.27px;">Origin</div><div class="lbl" style="left:113px;top:244.7px;font-size:11px;line-height:13px;color:#333;letter-spacing:-0.15px;">Joints</div><div class="lbl" style="left:113px;top:268.7px;font-size:11px;line-height:13px;color:#333;letter-spacing:-0.04px;">Sketches</div><div class="lbl" style="left:113px;top:292.7px;font-size:11px;line-height:13px;color:#333;letter-spacing:-0.07px;">Construction</div><div class="lbl" style="left:113px;top:316.7px;font-size:11px;line-height:13px;color:#333;letter-spacing:-0.20px;">base:1</div><div class="lbl" style="left:113px;top:340.7px;font-size:11px;line-height:13px;color:#333;letter-spacing:-0.31px;">handle:1</div><div class="lbl" style="left:113px;top:364.7px;font-size:11px;line-height:13px;color:#333;letter-spacing:-0.07px;">slider:1</div><div class="lbl" style="left:113px;top:388.7px;font-size:11px;line-height:13px;color:#333;letter-spacing:-0.21px;">pin:1</div><div class="lbl" style="left:113px;top:412.7px;font-size:11px;line-height:13px;color:#333;letter-spacing:-0.07px;">slider:2</div><div class="lbl" style="left:113px;top:436.7px;font-size:11px;line-height:13px;color:#333;letter-spacing:-0.07px;">slider:3</div><div class="lbl" style="left:113px;top:460.7px;font-size:11px;line-height:13px;color:#333;letter-spacing:-0.21px;">pin:2</div><div class="lbl" style="left:113px;top:484.7px;font-size:11px;line-height:13px;color:#333;letter-spacing:-0.21px;">pin:3</div>
<div class="abs" style="left:1px;top:642px;width:298px;height:25px;background:#f5f5f5;border:1px solid #cfcfcf;box-sizing:content-box"></div><svg class="abs" style="left:0;top:640px" width="1280" height="32" viewBox="0 640 1280 32"><circle cx="284.5" cy="655.2" r="4.3" fill="#222"/><path d="M282,655.2 h5 M284.5,652.7 v5" stroke="#eee" stroke-width="1.2"/><path d="M296.5,649 L296.5,661" stroke="#888" stroke-width="1"/><path d="M298.5,651 L298.5,659" stroke="#aaa" stroke-width="1"/><ellipse cx="524" cy="657" rx="7.3" ry="3" fill="none" stroke="#222" stroke-width="1.2"/><path d="M524,650 L524,664.5" stroke="#222" stroke-width="1.2"/><path d="M521.5,651.3 L524,648 L526.5,651.3 Z" fill="#222"/><path d="M519.5,657.5 L516.5,660.2 L520.5,661.5 Z" fill="#222"/><path d="M536.8,653.9000000000001 L542.8,653.9000000000001 L539.8,657.9000000000001 Z" fill="#222"/><rect x="549.7" y="652.5" width="15" height="10.5" fill="#f4f4f4" stroke="#222" stroke-width="1.1"/><rect x="552.5" y="655.5" width="9.5" height="4.5" fill="#ddd" stroke="#222" stroke-width="0.9"/><path d="M551,652 L551,650 L556,650 L557.5,648.5 L559,650 L560.5,648.5 L562,650 L563.5,650 L563.5,652" fill="#888" stroke="#222" stroke-width="0.8"/><path d="M579,657 L576.5,654.5 C575.5,653.5 577,652.3 578,653.2 L580.2,655.2 L580.2,650.5 C580.2,649.2 582.2,649.2 582.2,650.5 L582.4,654 L582.8,649.3 C582.9,648 584.9,648.1 584.8,649.4 L584.8,654 L585.6,650 C585.8,648.8 587.7,649.1 587.5,650.4 L587.2,654.5 L588.3,652 C588.8,650.9 590.6,651.6 590.1,652.8 L588.5,659 C588,661.5 586.5,663.8 584,663.8 L582.5,663.8 C580.5,663.8 579.8,662 579,660.5 Z" fill="#fff" stroke="#222" stroke-width="1" stroke-linejoin="round"/><circle cx="606.5" cy="655" r="4.8" fill="#f8f8f8" stroke="#222" stroke-width="1.3"/><path d="M610,658.5 L614,662.5" stroke="#222" stroke-width="2.2" stroke-linecap="round"/><path d="M612.5,650.5 h4.5 M614.75,648.3 v4.5 M612.5,655 h4.5" stroke="#222" stroke-width="1"/><rect x="627.2" y="648.5" width="15.5" height="15" fill="none" stroke="#222" stroke-width="1" stroke-dasharray="2,1.6"/><circle cx="633.5" cy="654.5" r="5.6" fill="#fafafa" stroke="#222" stroke-width="1.3"/><path d="M637.5,658.8 L641.5,662.8" stroke="#222" stroke-width="2.4" stroke-linecap="round"/><path d="M647.5,653.9000000000001 L653.5,653.9000000000001 L650.5,657.9000000000001 Z" fill="#222"/><rect x="668.3" y="648.7" width="15.4" height="11" rx="1" fill="#9bbce6" stroke="#33476b" stroke-width="1.3"/><rect x="673.5" y="660" width="5" height="2" fill="#33476b"/><rect x="671" y="662" width="10" height="1.6" fill="#33476b"/><path d="M686.2,653.9000000000001 L692.2,653.9000000000001 L689.2,657.9000000000001 Z" fill="#222"/><rect x="699.3" y="648.7" width="15.4" height="15" fill="#e8e8e8" stroke="#333" stroke-width="1.1"/><path d="M703.1,648.7 v15 M707,648.7 v15 M710.9,648.7 v15 M699.3,652.5 h15.4 M699.3,656.2 h15.4 M699.3,660 h15.4" stroke="#444" stroke-width="0.8"/><path d="M716.9,653.9000000000001 L722.9,653.9000000000001 L719.9,657.9000000000001 Z" fill="#222"/><rect x="729.8" y="649.3" width="15.2" height="13" fill="#33476b"/><rect x="731.2" y="650.7" width="5.6" height="4.5" fill="#9bbce6"/><rect x="738" y="650.7" width="5.6" height="4.5" fill="#9bbce6"/><rect x="731.2" y="656.4" width="5.6" height="4.5" fill="#9bbce6"/><rect x="738" y="656.4" width="5.6" height="4.5" fill="#9bbce6"/><path d="M747.9,653.9000000000001 L753.9,653.9000000000001 L750.9,657.9000000000001 Z" fill="#222"/></svg><div class="lbl" style="left:26px;top:649px;font-size:11px;line-height:13px;color:#555;letter-spacing:-1.02px;">COMMENTS</div><div class="abs" style="left:0;top:671px;width:1280px;height:49px;background:#f3f3f3;border-top:2px solid #c9c9c9;box-sizing:border-box"></div><svg class="abs" style="left:0;top:672px" width="1280" height="48" viewBox="0 672 1280 48"><g fill="#333"><rect x="8" y="690" width="2" height="15.5"/><path d="M20,690 L20,705.5 L10.5,697.7 Z"/><path d="M41.5,691 L41.5,704.5 L32,697.7 Z"/><rect x="43" y="694.5" width="2.5" height="6.5"/><path d="M58,689.5 L58,706 L70.5,697.7 Z"/><path d="M85.5,691 L85.5,704.5 L95,697.7 Z"/><rect x="81.8" y="694.5" width="2.5" height="6.5"/><path d="M107.5,690 L107.5,705.5 L117,697.7 Z"/><rect x="117.8" y="690" width="2" height="15.5"/></g><path d="M151.6,713.5 L1139.55,713.5" stroke="#cfcfcf" stroke-width="1.6" fill="none"/><path d="M151.6,707.5 L151.6,713.5" stroke="#cfcfcf" stroke-width="1.6"/><rect x="143.8" y="689.8" width="13.199999999999989" height="13.100000000000023" fill="none" stroke="#555" stroke-width="0.9" stroke-dasharray="2.5,1.8"/><rect x="142.8" y="688.8" width="2" height="2" fill="#444"/><rect x="156.0" y="688.8" width="2" height="2" fill="#444"/><rect x="142.8" y="701.9" width="2" height="2" fill="#444"/><rect x="156.0" y="701.9" width="2" height="2" fill="#444"/><path d="M151.4,703.5 L152.6,699.9 L156.9,696.0 L159.0,698.3 L154.70000000000002,702.5 Z" fill="#e6dc8a" stroke="#c9bd63" stroke-width="0.5"/><path d="M156.9,696.0 L158.20000000000002,694.8 L160.20000000000002,697.0 L159.0,698.3 Z" fill="#555"/><path d="M151.4,703.5 L152.0,701.7 L153.20000000000002,702.9 Z" fill="#444"/><path d="M175.5,707.5 L175.5,713.5" stroke="#cfcfcf" stroke-width="1.6"/><rect x="167.3" y="701.5" width="9.5" height="1.6" fill="#bfe0e0"/><polygon points="167.3,691.5 170.3,688.5 179.8,688.5 176.8,691.5" fill="#93c9ef"/><polygon points="176.8,691.5 179.8,688.5 179.8,698.5 176.8,701.5" fill="#4c96d4"/><rect x="167.3" y="691.5" width="9.5" height="10" fill="#6db3e8"/><path d="M181.9,702.0 L181.9,692.0" stroke="#222" stroke-width="1.1"/><path d="M180.10000000000002,693.0 L181.9,689.5 L183.70000000000002,693.0 Z" fill="#222"/><path d="M199.5,707.5 L199.5,713.5" stroke="#cfcfcf" stroke-width="1.6"/><rect x="191.70000000000002" y="689.8" width="13.199999999999989" height="13.100000000000023" fill="none" stroke="#555" stroke-width="0.9" stroke-dasharray="2.5,1.8"/><rect x="190.70000000000002" y="688.8" width="2" height="2" fill="#444"/><rect x="203.9" y="688.8" width="2" height="2" fill="#444"/><rect x="190.70000000000002" y="701.9" width="2" height="2" fill="#444"/><rect x="203.9" y="701.9" width="2" height="2" fill="#444"/><path d="M199.3,703.5 L200.5,699.9 L204.8,696.0 L206.9,698.3 L202.60000000000002,702.5 Z" fill="#e6dc8a" stroke="#c9bd63" stroke-width="0.5"/><path d="M204.8,696.0 L206.10000000000002,694.8 L208.10000000000002,697.0 L206.9,698.3 Z" fill="#555"/><path d="M199.3,703.5 L199.9,701.7 L201.10000000000002,702.9 Z" fill="#444"/><path d="M223.4,707.5 L223.4,713.5" stroke="#cfcfcf" stroke-width="1.6"/><rect x="215.6" y="689.8" width="13.199999999999989" height="13.100000000000023" fill="none" stroke="#555" stroke-width="0.9" stroke-dasharray="2.5,1.8"/><rect x="214.6" y="688.8" width="2" height="2" fill="#444"/><rect x="227.79999999999998" y="688.8" width="2" height="2" fill="#444"/><rect x="214.6" y="701.9" width="2" height="2" fill="#444"/><rect x="227.79999999999998" y="701.9" width="2" height="2" fill="#444"/><path d="M223.2,703.5 L224.39999999999998,699.9 L228.7,696.0 L230.79999999999998,698.3 L226.5,702.5 Z" fill="#e6dc8a" stroke="#c9bd63" stroke-width="0.5"/><path d="M228.7,696.0 L230.0,694.8 L232.0,697.0 L230.79999999999998,698.3 Z" fill="#555"/><path d="M223.2,703.5 L223.79999999999998,701.7 L225.0,702.9 Z" fill="#444"/><path d="M247.4,707.5 L247.4,713.5" stroke="#cfcfcf" stroke-width="1.6"/><rect x="239.2" y="701.5" width="9.5" height="1.6" fill="#bfe0e0"/><polygon points="239.2,691.5 242.2,688.5 251.7,688.5 248.7,691.5" fill="#93c9ef"/><polygon points="248.7,691.5 251.7,688.5 251.7,698.5 248.7,701.5" fill="#4c96d4"/><rect x="239.2" y="691.5" width="9.5" height="10" fill="#6db3e8"/><path d="M253.79999999999998,702.0 L253.79999999999998,692.0" stroke="#222" stroke-width="1.1"/><path d="M252.0,693.0 L253.79999999999998,689.5 L255.6,693.0 Z" fill="#222"/><path d="M271.4,707.5 L271.4,713.5" stroke="#cfcfcf" stroke-width="1.6"/><circle cx="270.2" cy="690.5" r="2" fill="#8a8a8a"/><circle cx="275.4" cy="693.5" r="2" fill="#8a8a8a"/><circle cx="275.4" cy="699.5" r="2" fill="#8a8a8a"/><circle cx="270.2" cy="702.5" r="2" fill="#8a8a8a"/><circle cx="265.0" cy="699.5" r="2" fill="#8a8a8a"/><circle cx="265.0" cy="693.5" r="1.7" fill="#fff" stroke="#555" stroke-width="0.9"/><path d="M295.3,707.5 L295.3,713.5" stroke="#cfcfcf" stroke-width="1.6"/><rect x="287.5" y="689.8" width="13.200000000000045" height="13.100000000000023" fill="none" stroke="#555" stroke-width="0.9" stroke-dasharray="2.5,1.8"/><rect x="286.5" y="688.8" width="2" height="2" fill="#444"/><rect x="299.70000000000005" y="688.8" width="2" height="2" fill="#444"/><rect x="286.5" y="701.9" width="2" height="2" fill="#444"/><rect x="299.70000000000005" y="701.9" width="2" height="2" fill="#444"/><path d="M295.1,703.5 L296.3,699.9 L300.6,696.0 L302.70000000000005,698.3 L298.40000000000003,702.5 Z" fill="#e6dc8a" stroke="#c9bd63" stroke-width="0.5"/><path d="M300.6,696.0 L301.90000000000003,694.8 L303.90000000000003,697.0 L302.70000000000005,698.3 Z" fill="#555"/><path d="M295.1,703.5 L295.70000000000005,701.7 L296.90000000000003,702.9 Z" fill="#444"/><path d="M319.2,707.5 L319.2,713.5" stroke="#cfcfcf" stroke-width="1.6"/><rect x="311.1" y="701.5" width="9.5" height="1.6" fill="#bfe0e0"/><polygon points="311.1,691.5 314.1,688.5 323.6,688.5 320.6,691.5" fill="#93c9ef"/><polygon points="320.6,691.5 323.6,688.5 323.6,698.5 320.6,701.5" fill="#4c96d4"/><rect x="311.1" y="691.5" width="9.5" height="10" fill="#6db3e8"/><path d="M325.70000000000005,702.0 L325.70000000000005,692.0" stroke="#222" stroke-width="1.1"/><path d="M323.90000000000003,693.0 L325.70000000000005,689.5 L327.5,693.0 Z" fill="#222"/><path d="M343.2,707.5 L343.2,713.5" stroke="#cfcfcf" stroke-width="1.6"/><path d="M334.0,697.5 L341.0,689.5 L350.0,695.5 L343.0,703.5 Z" fill="#d9924f"/><rect x="339.0" y="694.0" width="5.5" height="5" fill="#f6e2b8" transform="rotate(-10 342.0 696.5)"/><path d="M334.0,699.0 L334.0,704.0 L339.5,704.0" fill="none" stroke="#444" stroke-width="0.9"/><path d="M367.1,707.5 L367.1,713.5" stroke="#cfcfcf" stroke-width="1.6"/><rect x="359.29999999999995" y="689.8" width="13.200000000000045" height="13.100000000000023" fill="none" stroke="#555" stroke-width="0.9" stroke-dasharray="2.5,1.8"/><rect x="358.29999999999995" y="688.8" width="2" height="2" fill="#444"/><rect x="371.5" y="688.8" width="2" height="2" fill="#444"/><rect x="358.29999999999995" y="701.9" width="2" height="2" fill="#444"/><rect x="371.5" y="701.9" width="2" height="2" fill="#444"/><path d="M366.9,703.5 L368.09999999999997,699.9 L372.4,696.0 L374.5,698.3 L370.2,702.5 Z" fill="#e6dc8a" stroke="#c9bd63" stroke-width="0.5"/><path d="M372.4,696.0 L373.7,694.8 L375.7,697.0 L374.5,698.3 Z" fill="#555"/><path d="M366.9,703.5 L367.5,701.7 L368.7,702.9 Z" fill="#444"/><path d="M391.1,707.5 L391.1,713.5" stroke="#cfcfcf" stroke-width="1.6"/><rect x="382.9" y="701.5" width="9.5" height="1.6" fill="#bfe0e0"/><polygon points="382.9,691.5 385.9,688.5 395.4,688.5 392.4,691.5" fill="#93c9ef"/><polygon points="392.4,691.5 395.4,688.5 395.4,698.5 392.4,701.5" fill="#4c96d4"/><rect x="382.9" y="691.5" width="9.5" height="10" fill="#6db3e8"/><path d="M397.5,702.0 L397.5,692.0" stroke="#222" stroke-width="1.1"/><path d="M395.7,693.0 L397.5,689.5 L399.29999999999995,693.0 Z" fill="#222"/><path d="M415.0,707.5 L415.0,713.5" stroke="#cfcfcf" stroke-width="1.6"/><path d="M406.3,692.5 L409.8,689.0 L413.8,689.0 C418.8,690.0 421.3,693.5 421.3,697.5 L421.3,700.5 L418.3,704.0 L406.3,704.0 Z" fill="#dcdcdc" stroke="#555" stroke-width="0.9" stroke-linejoin="round"/><path d="M412.3,691.5 L413.8,689.0 C418.8,690.0 421.3,693.5 421.3,697.5 L418.8,699.7 C418.3,695.5 416.3,692.5 412.3,691.5 Z" fill="#5fa6e0"/><path d="M439.0,707.5 L439.0,713.5" stroke="#cfcfcf" stroke-width="1.6"/><rect x="431.2" y="689.8" width="13.200000000000045" height="13.100000000000023" fill="none" stroke="#555" stroke-width="0.9" stroke-dasharray="2.5,1.8"/><rect x="430.2" y="688.8" width="2" height="2" fill="#444"/><rect x="443.40000000000003" y="688.8" width="2" height="2" fill="#444"/><rect x="430.2" y="701.9" width="2" height="2" fill="#444"/><rect x="443.40000000000003" y="701.9" width="2" height="2" fill="#444"/><path d="M438.8,703.5 L440.0,699.9 L444.3,696.0 L446.40000000000003,698.3 L442.1,702.5 Z" fill="#e6dc8a" stroke="#c9bd63" stroke-width="0.5"/><path d="M444.3,696.0 L445.6,694.8 L447.6,697.0 L446.40000000000003,698.3 Z" fill="#555"/><path d="M438.8,703.5 L439.40000000000003,701.7 L440.6,702.9 Z" fill="#444"/><path d="M462.9,707.5 L462.9,713.5" stroke="#cfcfcf" stroke-width="1.6"/><rect x="454.7" y="701.5" width="9.5" height="1.6" fill="#bfe0e0"/><polygon points="454.7,691.5 457.7,688.5 467.2,688.5 464.2,691.5" fill="#93c9ef"/><polygon points="464.2,691.5 467.2,688.5 467.2,698.5 464.2,701.5" fill="#4c96d4"/><rect x="454.7" y="691.5" width="9.5" height="10" fill="#6db3e8"/><path d="M469.3,702.0 L469.3,692.0" stroke="#222" stroke-width="1.1"/><path d="M467.5,693.0 L469.3,689.5 L471.09999999999997,693.0 Z" fill="#222"/><path d="M486.9,707.5 L486.9,713.5" stroke="#cfcfcf" stroke-width="1.6"/><rect x="478.7" y="701.5" width="9.5" height="1.6" fill="#bfe0e0"/><polygon points="478.7,691.5 481.7,688.5 491.2,688.5 488.2,691.5" fill="#93c9ef"/><polygon points="488.2,691.5 491.2,688.5 491.2,698.5 488.2,701.5" fill="#4c96d4"/><rect x="478.7" y="691.5" width="9.5" height="10" fill="#6db3e8"/><path d="M493.3,702.0 L493.3,692.0" stroke="#222" stroke-width="1.1"/><path d="M491.5,693.0 L493.3,689.5 L495.09999999999997,693.0 Z" fill="#222"/><path d="M510.9,707.5 L510.9,713.5" stroke="#cfcfcf" stroke-width="1.6"/><rect x="502.7" y="701.5" width="9.5" height="1.6" fill="#bfe0e0"/><polygon points="502.7,691.5 505.7,688.5 515.2,688.5 512.2,691.5" fill="#93c9ef"/><polygon points="512.2,691.5 515.2,688.5 515.2,698.5 512.2,701.5" fill="#4c96d4"/><rect x="502.7" y="691.5" width="9.5" height="10" fill="#6db3e8"/><path d="M517.3,702.0 L517.3,692.0" stroke="#222" stroke-width="1.1"/><path d="M515.5,693.0 L517.3,689.5 L519.1,693.0 Z" fill="#222"/><path d="M534.8,707.5 L534.8,713.5" stroke="#cfcfcf" stroke-width="1.6"/><polygon points="531.1,689.0 533.3000000000001,686.8 541.8000000000001,686.8 539.6,689.0" fill="#93c9ef"/><polygon points="539.6,689.0 541.8000000000001,686.8 541.8000000000001,695.3 539.6,697.5" fill="#4c96d4"/><rect x="531.1" y="689.0" width="8.5" height="8.5" fill="#6db3e8"/><polygon points="526.6,694.0 528.6,692.0 537.1,692.0 535.1,694.0" fill="#93c9ef"/><polygon points="535.1,694.0 537.1,692.0 537.1,700.5 535.1,702.5" fill="#4c96d4"/><rect x="526.6" y="694.0" width="8.5" height="8.5" fill="#6db3e8"/><path d="M558.8,707.5 L558.8,713.5" stroke="#cfcfcf" stroke-width="1.6"/><path d="M552.8,689.1 L558.6999999999999,689.1 L558.6999999999999,694.5000000000001 L556.9,696.3000000000001 L552.5,696.3000000000001 Q551.3,696.3000000000001 551.3,695.1 L551.3,690.7 Z" fill="#d6d6d6" stroke="#444" stroke-width="0.9" stroke-linejoin="round"/><path d="M551.5999999999999,690.8000000000001 L556.9,690.8000000000001 L558.6999999999999,689.1 M556.9,690.8000000000001 L556.9,696.3000000000001" fill="none" stroke="#777" stroke-width="0.6"/><path d="M560.6,697.2 L566.5,697.2 L566.5,702.6000000000001 L564.7,704.4000000000001 L560.3000000000001,704.4000000000001 Q559.1,704.4000000000001 559.1,703.2 L559.1,698.8000000000001 Z" fill="#d6d6d6" stroke="#444" stroke-width="0.9" stroke-linejoin="round"/><path d="M559.4,698.9000000000001 L564.7,698.9000000000001 L566.5,697.2 M564.7,698.9000000000001 L564.7,704.4000000000001" fill="none" stroke="#777" stroke-width="0.6"/><path d="M552.3,698.3 L552.3,701.5 L555.3,701.5" fill="none" stroke="#222" stroke-width="1.1"/><path d="M554.9,699.7 L557.1,701.5 L554.9,703.3 Z" fill="#222"/><path d="M582.7,707.5 L582.7,713.5" stroke="#cfcfcf" stroke-width="1.6"/><rect x="575.5" y="693.0" width="3" height="6.5" fill="#fff" stroke="#444" stroke-width="0.9"/><rect x="580.5" y="693.0" width="3" height="6.5" fill="#fff" stroke="#444" stroke-width="0.9"/><rect x="585.5" y="693.0" width="3" height="6.5" fill="#fff" stroke="#444" stroke-width="0.9"/><path d="M606.6,707.5 L606.6,713.5" stroke="#cfcfcf" stroke-width="1.6"/><path d="M597.4,702.5 L603.4,695.5 L606.9,698.5 L600.4,704.5 Z" fill="#b98a5d"/><path d="M603.4,695.5 L610.4,690.5 L612.4,693.0 L606.9,698.5 Z" fill="#8a6a4c"/><path d="M630.6,707.5 L630.6,713.5" stroke="#cfcfcf" stroke-width="1.6"/><path d="M624.5999999999999,689.1 L630.4999999999999,689.1 L630.4999999999999,694.5000000000001 L628.6999999999999,696.3000000000001 L624.3,696.3000000000001 Q623.0999999999999,696.3000000000001 623.0999999999999,695.1 L623.0999999999999,690.7 Z" fill="#d6d6d6" stroke="#444" stroke-width="0.9" stroke-linejoin="round"/><path d="M623.3999999999999,690.8000000000001 L628.6999999999999,690.8000000000001 L630.4999999999999,689.1 M628.6999999999999,690.8000000000001 L628.6999999999999,696.3000000000001" fill="none" stroke="#777" stroke-width="0.6"/><path d="M632.4,697.2 L638.3,697.2 L638.3,702.6000000000001 L636.5,704.4000000000001 L632.1,704.4000000000001 Q630.9,704.4000000000001 630.9,703.2 L630.9,698.8000000000001 Z" fill="#d6d6d6" stroke="#444" stroke-width="0.9" stroke-linejoin="round"/><path d="M631.1999999999999,698.9000000000001 L636.5,698.9000000000001 L638.3,697.2 M636.5,698.9000000000001 L636.5,704.4000000000001" fill="none" stroke="#777" stroke-width="0.6"/><path d="M624.0999999999999,698.3 L624.0999999999999,701.5 L627.0999999999999,701.5" fill="none" stroke="#222" stroke-width="1.1"/><path d="M626.6999999999999,699.7 L628.9,701.5 L626.6999999999999,703.3 Z" fill="#222"/><path d="M654.5,707.5 L654.5,713.5" stroke="#cfcfcf" stroke-width="1.6"/><path d="M648.5,689.1 L654.4,689.1 L654.4,694.5000000000001 L652.6,696.3000000000001 L648.2,696.3000000000001 Q647.0,696.3000000000001 647.0,695.1 L647.0,690.7 Z" fill="#d6d6d6" stroke="#444" stroke-width="0.9" stroke-linejoin="round"/><path d="M647.3,690.8000000000001 L652.6,690.8000000000001 L654.4,689.1 M652.6,690.8000000000001 L652.6,696.3000000000001" fill="none" stroke="#777" stroke-width="0.6"/><path d="M656.3000000000001,697.2 L662.2,697.2 L662.2,702.6000000000001 L660.4000000000001,704.4000000000001 L656.0000000000001,704.4000000000001 Q654.8000000000001,704.4000000000001 654.8000000000001,703.2 L654.8000000000001,698.8000000000001 Z" fill="#d6d6d6" stroke="#444" stroke-width="0.9" stroke-linejoin="round"/><path d="M655.1,698.9000000000001 L660.4000000000001,698.9000000000001 L662.2,697.2 M660.4000000000001,698.9000000000001 L660.4000000000001,704.4000000000001" fill="none" stroke="#777" stroke-width="0.6"/><path d="M648.0,698.3 L648.0,701.5 L651.0,701.5" fill="none" stroke="#222" stroke-width="1.1"/><path d="M650.6,699.7 L652.8000000000001,701.5 L650.6,703.3 Z" fill="#222"/><path d="M678.5,707.5 L678.5,713.5" stroke="#cfcfcf" stroke-width="1.6"/><rect x="670.6999999999999" y="689.8" width="13.200000000000045" height="13.100000000000023" fill="none" stroke="#555" stroke-width="0.9" stroke-dasharray="2.5,1.8"/><rect x="669.6999999999999" y="688.8" width="2" height="2" fill="#444"/><rect x="682.9" y="688.8" width="2" height="2" fill="#444"/><rect x="669.6999999999999" y="701.9" width="2" height="2" fill="#444"/><rect x="682.9" y="701.9" width="2" height="2" fill="#444"/><path d="M678.3,703.5 L679.5,699.9 L683.8,696.0 L685.9,698.3 L681.5999999999999,702.5 Z" fill="#e6dc8a" stroke="#c9bd63" stroke-width="0.5"/><path d="M683.8,696.0 L685.0999999999999,694.8 L687.0999999999999,697.0 L685.9,698.3 Z" fill="#555"/><path d="M678.3,703.5 L678.9,701.7 L680.0999999999999,702.9 Z" fill="#444"/><path d="M702.5,707.5 L702.5,713.5" stroke="#cfcfcf" stroke-width="1.6"/><polygon points="695.6,694.5 700.6,690.0 702.6,690.5 702.6,696.0 700.6,696.5 700.6,700.0 696.1,704.5 695.6,704.0" fill="#cfcfcf" stroke="#666" stroke-width="0.9" stroke-linejoin="round"/><polygon points="704.1,695.5 706.1,695.0 706.9,691.0 710.9,694.2 710.9,704.2 709.6,704.6 706.9,701.3 704.1,701.0" fill="#cfcfcf" stroke="#666" stroke-width="0.9" stroke-linejoin="round"/><path d="M726.4,707.5 L726.4,713.5" stroke="#cfcfcf" stroke-width="1.6"/><polygon points="719.5,694.5 724.5,690.0 726.5,690.5 726.5,696.0 724.5,696.5 724.5,700.0 720.0,704.5 719.5,704.0" fill="#cfcfcf" stroke="#666" stroke-width="0.9" stroke-linejoin="round"/><polygon points="728.0,695.5 730.0,695.0 730.8,691.0 734.8,694.2 734.8,704.2 733.5,704.6 730.8,701.3 728.0,701.0" fill="#cfcfcf" stroke="#666" stroke-width="0.9" stroke-linejoin="round"/><path d="M750.4,707.5 L750.4,713.5" stroke="#cfcfcf" stroke-width="1.6"/><rect x="743.5" y="689.0" width="6" height="15" fill="#fff" stroke="#444" stroke-width="1"/><rect x="750.2" y="688.5" width="8.8" height="7" fill="#5fa6e0"/><path d="M774.3,707.5 L774.3,713.5" stroke="#cfcfcf" stroke-width="1.6"/><rect x="767.4" y="689.0" width="6" height="15" fill="#fff" stroke="#444" stroke-width="1"/><rect x="774.1" y="688.5" width="8.8" height="7" fill="#5fa6e0"/><path d="M798.2,707.5 L798.2,713.5" stroke="#cfcfcf" stroke-width="1.6"/><polygon points="791.4,694.5 796.4,690.0 798.4,690.5 798.4,696.0 796.4,696.5 796.4,700.0 791.9,704.5 791.4,704.0" fill="#cfcfcf" stroke="#666" stroke-width="0.9" stroke-linejoin="round"/><polygon points="799.9,695.5 801.9,695.0 802.6999999999999,691.0 806.6999999999999,694.2 806.6999999999999,704.2 805.4,704.6 802.6999999999999,701.3 799.9,701.0" fill="#cfcfcf" stroke="#666" stroke-width="0.9" stroke-linejoin="round"/><path d="M822.2,707.5 L822.2,713.5" stroke="#cfcfcf" stroke-width="1.6"/><polygon points="815.3,694.5 820.3,690.0 822.3,690.5 822.3,696.0 820.3,696.5 820.3,700.0 815.8,704.5 815.3,704.0" fill="#cfcfcf" stroke="#666" stroke-width="0.9" stroke-linejoin="round"/><polygon points="823.8,695.5 825.8,695.0 826.5999999999999,691.0 830.5999999999999,694.2 830.5999999999999,704.2 829.3,704.6 826.5999999999999,701.3 823.8,701.0" fill="#cfcfcf" stroke="#666" stroke-width="0.9" stroke-linejoin="round"/><path d="M846.1,707.5 L846.1,713.5" stroke="#cfcfcf" stroke-width="1.6"/><polygon points="839.3,694.5 844.3,690.0 846.3,690.5 846.3,696.0 844.3,696.5 844.3,700.0 839.8,704.5 839.3,704.0" fill="#cfcfcf" stroke="#666" stroke-width="0.9" stroke-linejoin="round"/><polygon points="847.8,695.5 849.8,695.0 850.5999999999999,691.0 854.5999999999999,694.2 854.5999999999999,704.2 853.3,704.6 850.5999999999999,701.3 847.8,701.0" fill="#cfcfcf" stroke="#666" stroke-width="0.9" stroke-linejoin="round"/><path d="M870.1,707.5 L870.1,713.5" stroke="#cfcfcf" stroke-width="1.6"/><rect x="863.2" y="689.0" width="6" height="15" fill="#fff" stroke="#444" stroke-width="1"/><rect x="869.9000000000001" y="688.5" width="8.8" height="7" fill="#5fa6e0"/><path d="M894.0,707.5 L894.0,713.5" stroke="#cfcfcf" stroke-width="1.6"/><polygon points="887.1,694.5 892.1,690.0 894.1,690.5 894.1,696.0 892.1,696.5 892.1,700.0 887.6,704.5 887.1,704.0" fill="#cfcfcf" stroke="#666" stroke-width="0.9" stroke-linejoin="round"/><polygon points="895.6,695.5 897.6,695.0 898.4,691.0 902.4,694.2 902.4,704.2 901.1,704.6 898.4,701.3 895.6,701.0" fill="#cfcfcf" stroke="#666" stroke-width="0.9" stroke-linejoin="round"/><path d="M918.0,707.5 L918.0,713.5" stroke="#cfcfcf" stroke-width="1.6"/><rect x="911.1" y="689.0" width="6" height="15" fill="#fff" stroke="#444" stroke-width="1"/><rect x="917.8000000000001" y="688.5" width="8.8" height="7" fill="#5fa6e0"/><path d="M942.0,707.5 L942.0,713.5" stroke="#cfcfcf" stroke-width="1.6"/><polygon points="935.1,694.5 940.1,690.0 942.1,690.5 942.1,696.0 940.1,696.5 940.1,700.0 935.6,704.5 935.1,704.0" fill="#cfcfcf" stroke="#666" stroke-width="0.9" stroke-linejoin="round"/><polygon points="943.6,695.5 945.6,695.0 946.4,691.0 950.4,694.2 950.4,704.2 949.1,704.6 946.4,701.3 943.6,701.0" fill="#cfcfcf" stroke="#666" stroke-width="0.9" stroke-linejoin="round"/><path d="M965.9,707.5 L965.9,713.5" stroke="#cfcfcf" stroke-width="1.6"/><path d="M959.9,689.1 L965.8,689.1 L965.8,694.5000000000001 L964.0,696.3000000000001 L959.6,696.3000000000001 Q958.4,696.3000000000001 958.4,695.1 L958.4,690.7 Z" fill="#d6d6d6" stroke="#444" stroke-width="0.9" stroke-linejoin="round"/><path d="M958.6999999999999,690.8000000000001 L964.0,690.8000000000001 L965.8,689.1 M964.0,690.8000000000001 L964.0,696.3000000000001" fill="none" stroke="#777" stroke-width="0.6"/><path d="M967.7,697.2 L973.6,697.2 L973.6,702.6000000000001 L971.8000000000001,704.4000000000001 L967.4000000000001,704.4000000000001 Q966.2,704.4000000000001 966.2,703.2 L966.2,698.8000000000001 Z" fill="#d6d6d6" stroke="#444" stroke-width="0.9" stroke-linejoin="round"/><path d="M966.5,698.9000000000001 L971.8000000000001,698.9000000000001 L973.6,697.2 M971.8000000000001,698.9000000000001 L971.8000000000001,704.4000000000001" fill="none" stroke="#777" stroke-width="0.6"/><path d="M959.4,698.3 L959.4,701.5 L962.4,701.5" fill="none" stroke="#222" stroke-width="1.1"/><path d="M962.0,699.7 L964.2,701.5 L962.0,703.3 Z" fill="#222"/><path d="M989.9,707.5 L989.9,713.5" stroke="#cfcfcf" stroke-width="1.6"/><path d="M983.9,689.1 L989.8,689.1 L989.8,694.5000000000001 L988.0,696.3000000000001 L983.6,696.3000000000001 Q982.4,696.3000000000001 982.4,695.1 L982.4,690.7 Z" fill="#d6d6d6" stroke="#444" stroke-width="0.9" stroke-linejoin="round"/><path d="M982.6999999999999,690.8000000000001 L988.0,690.8000000000001 L989.8,689.1 M988.0,690.8000000000001 L988.0,696.3000000000001" fill="none" stroke="#777" stroke-width="0.6"/><path d="M991.7,697.2 L997.6,697.2 L997.6,702.6000000000001 L995.8000000000001,704.4000000000001 L991.4000000000001,704.4000000000001 Q990.2,704.4000000000001 990.2,703.2 L990.2,698.8000000000001 Z" fill="#d6d6d6" stroke="#444" stroke-width="0.9" stroke-linejoin="round"/><path d="M990.5,698.9000000000001 L995.8000000000001,698.9000000000001 L997.6,697.2 M995.8000000000001,698.9000000000001 L995.8000000000001,704.4000000000001" fill="none" stroke="#777" stroke-width="0.6"/><path d="M983.4,698.3 L983.4,701.5 L986.4,701.5" fill="none" stroke="#222" stroke-width="1.1"/><path d="M986.0,699.7 L988.2,701.5 L986.0,703.3 Z" fill="#222"/><path d="M1013.8,707.5 L1013.8,713.5" stroke="#cfcfcf" stroke-width="1.6"/><polygon points="1006.9,694.5 1011.9,690.0 1013.9,690.5 1013.9,696.0 1011.9,696.5 1011.9,700.0 1007.4,704.5 1006.9,704.0" fill="#cfcfcf" stroke="#666" stroke-width="0.9" stroke-linejoin="round"/><polygon points="1015.4,695.5 1017.4,695.0 1018.1999999999999,691.0 1022.1999999999999,694.2 1022.1999999999999,704.2 1020.9,704.6 1018.1999999999999,701.3 1015.4,701.0" fill="#cfcfcf" stroke="#666" stroke-width="0.9" stroke-linejoin="round"/><path d="M1037.8,707.5 L1037.8,713.5" stroke="#cfcfcf" stroke-width="1.6"/><polygon points="1030.8,694.5 1035.8,690.0 1037.8,690.5 1037.8,696.0 1035.8,696.5 1035.8,700.0 1031.3,704.5 1030.8,704.0" fill="#cfcfcf" stroke="#666" stroke-width="0.9" stroke-linejoin="round"/><polygon points="1039.3,695.5 1041.3,695.0 1042.1,691.0 1046.1,694.2 1046.1,704.2 1044.8,704.6 1042.1,701.3 1039.3,701.0" fill="#cfcfcf" stroke="#666" stroke-width="0.9" stroke-linejoin="round"/><path d="M1061.7,707.5 L1061.7,713.5" stroke="#cfcfcf" stroke-width="1.6"/><path d="M1053.0,692.5 L1056.5,689.0 L1060.5,689.0 C1065.5,690.0 1068.0,693.5 1068.0,697.5 L1068.0,700.5 L1065.0,704.0 L1053.0,704.0 Z" fill="#dcdcdc" stroke="#555" stroke-width="0.9" stroke-linejoin="round"/><path d="M1059.0,691.5 L1060.5,689.0 C1065.5,690.0 1068.0,693.5 1068.0,697.5 L1065.5,699.7 C1065.0,695.5 1063.0,692.5 1059.0,691.5 Z" fill="#5fa6e0"/><path d="M1085.6,707.5 L1085.6,713.5" stroke="#cfcfcf" stroke-width="1.6"/><rect x="1077.8000000000002" y="689.8" width="13.199999999999818" height="13.100000000000023" fill="none" stroke="#555" stroke-width="0.9" stroke-dasharray="2.5,1.8"/><rect x="1076.8000000000002" y="688.8" width="2" height="2" fill="#444"/><rect x="1090.0" y="688.8" width="2" height="2" fill="#444"/><rect x="1076.8000000000002" y="701.9" width="2" height="2" fill="#444"/><rect x="1090.0" y="701.9" width="2" height="2" fill="#444"/><path d="M1085.4,703.5 L1086.6000000000001,699.9 L1090.9,696.0 L1093.0,698.3 L1088.7,702.5 Z" fill="#e6dc8a" stroke="#c9bd63" stroke-width="0.5"/><path d="M1090.9,696.0 L1092.2,694.8 L1094.2,697.0 L1093.0,698.3 Z" fill="#555"/><path d="M1085.4,703.5 L1086.0,701.7 L1087.2,702.9 Z" fill="#444"/><path d="M1109.6,707.5 L1109.6,713.5" stroke="#cfcfcf" stroke-width="1.6"/><g opacity="0.75"><rect x="1101.4" y="701.5" width="9.5" height="1.6" fill="#bfe0e0"/><polygon points="1101.4,691.5 1104.4,688.5 1113.9,688.5 1110.9,691.5" fill="#93c9ef"/><polygon points="1110.9,691.5 1113.9,688.5 1113.9,698.5 1110.9,701.5" fill="#4c96d4"/><rect x="1101.4" y="691.5" width="9.5" height="10" fill="#6db3e8"/><path d="M1116.0,702.0 L1116.0,692.0" stroke="#222" stroke-width="1.1"/><path d="M1114.2,693.0 L1116.0,689.5 L1117.8000000000002,693.0 Z" fill="#222"/></g><path d="M1133.5,707.5 L1133.5,713.5" stroke="#cfcfcf" stroke-width="1.6"/><path d="M1125.3,693.5 L1128.3,690.0 L1138.3,690.0 L1138.3,700.0 L1135.3,703.5 L1125.3,703.5 Z" fill="#c9c9c9" stroke="#888" stroke-width="0.9"/><rect x="577.5" y="709.5" width="8" height="8" fill="#ddd" stroke="#999" stroke-width="0.8"/><path d="M579,713.5 h5 M581.5,711 v5" stroke="#222" stroke-width="1.1"/><path d="M1146.6,685 L1146.6,716" stroke="#333" stroke-width="1.6"/><rect x="1140.5" y="683" width="12" height="4.5" fill="#555"/><polygon points="1273.1,695.7 1273.1,698.9 1270.5,699.4 1270.5,699.5 1272.0,701.7 1269.7,704.0 1267.5,702.5 1267.4,702.5 1266.9,705.1 1263.7,705.1 1263.2,702.5 1263.1,702.5 1260.9,704.0 1258.6,701.7 1260.1,699.5 1260.1,699.4 1257.5,698.9 1257.5,695.7 1260.1,695.2 1260.1,695.1 1258.6,692.9 1260.9,690.6 1263.1,692.1 1263.2,692.1 1263.7,689.5 1266.9,689.5 1267.4,692.1 1267.5,692.1 1269.7,690.6 1272.0,692.9 1270.5,695.1 1270.5,695.2" fill="#9a9a9a"/><circle cx="1265.3" cy="697.3" r="2.4" fill="#f4f4f4"/></svg><div class="abs" style="left:606px;top:666px;font-size:33px;line-height:40px;font-weight:bold;color:#b4b4b4;-webkit-text-stroke:1.3px #b4b4b4;opacity:0.42;letter-spacing:-1.2px;white-space:nowrap;font-family:'Liberation Sans','Noto Sans CJK SC',sans-serif">人人素材</div><svg class="abs" style="left:545px;top:664px" width="60" height="50" viewBox="545 664 60 50"><circle cx="568.7" cy="686" r="16.5" fill="none" stroke="rgba(190,190,190,0.55)" stroke-width="4"/><path d="M559.5,694.5 L568,681 L574.5,691 L581,681 L590.5,694.5" fill="none" stroke="rgba(110,160,215,0.75)" stroke-width="5" stroke-linejoin="round" stroke-linecap="round"/></svg><div class="abs" style="left:1108px;top:679px;font-size:19px;line-height:22px;font-weight:bold;color:#f8f8f8;white-space:nowrap;letter-spacing:0;transform:scaleX(0.908);transform-origin:0 0;text-shadow:0 0 1.5px #8f8f8f,0 0 2.5px #a5a5a5,0 1px 2px #b5b5b5;">Linked</div><div class="abs" style="left:1166.5px;top:680px;width:20.5px;height:20px;border-radius:2.5px;background:#fafafa;box-shadow:0 0 2.5px #8a8a8a"></div><div class="abs" style="left:1169.5px;top:679.5px;font-size:18px;line-height:22px;font-weight:bold;color:#b9b9b9;white-space:nowrap;letter-spacing:-0.3px">in</div><div class="abs" style="left:1192px;top:679px;font-size:19px;line-height:22px;font-weight:bold;color:#f8f8f8;white-space:nowrap;letter-spacing:0;transform:scaleX(0.851);transform-origin:0 0;text-shadow:0 0 1.5px #8f8f8f,0 0 2.5px #a5a5a5,0 1px 2px #b5b5b5;">Learning</div>

</div>
</body></html>
